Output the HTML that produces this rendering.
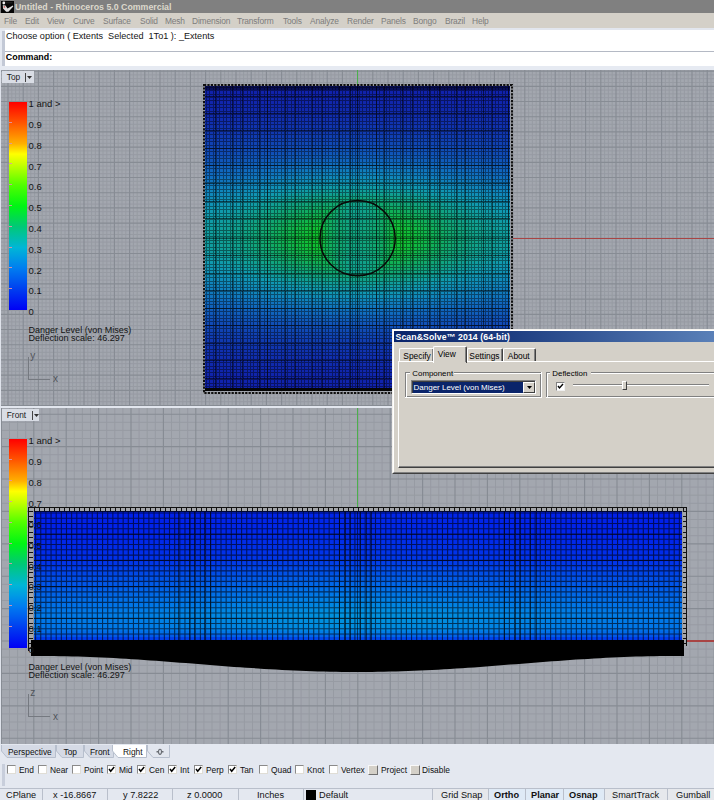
<!DOCTYPE html>
<html><head><meta charset="utf-8">
<style>
*{margin:0;padding:0;box-sizing:border-box}
html,body{width:714px;height:800px;overflow:hidden;background:#e4e8f0}
body{position:relative;font-family:"Liberation Sans",sans-serif;font-size:9px;color:#000}
.a{position:absolute;white-space:pre;line-height:1}
.g{position:absolute;display:block}
svg{position:absolute;display:block}
#title{left:0;top:0;width:714px;height:13px;background:#808080}
#menu{left:0;top:13px;width:714px;height:15px;background:#d4d0c8}
#menu span{position:absolute;top:3.5px;font-size:8.4px;color:#7c7c7c;line-height:1;letter-spacing:-0.15px}
#cmd{left:0;top:28px;width:714px;height:42px;background:#e6eaf2}
.vp{position:absolute;left:0;width:714px;height:336px;overflow:hidden}
.vtab{position:absolute;left:2px;top:1px;height:12px;background:#d9dde5}
.vtab span{position:absolute;top:1.7px;left:4.8px;font-size:8.3px;color:#1a1a1a;line-height:1}
.cbar{position:absolute;left:9px;width:18px}
.lbl{position:absolute;font-size:9.2px;color:#141414;line-height:1;white-space:pre}
#tabs{left:0;top:744px;width:714px;height:14px;background:#e4e8f0}
#osnap{left:0;top:758px;width:714px;height:30px;background:#e4e8f0}
#status{left:0;top:788px;width:714px;height:12px;background:#e4e8f0;border-top:1px solid #b8bcc4}
</style></head><body>
<div id="title" class="a"><div class="a" style="left:1px;top:1px;width:13px;height:12px;background:#050505"></div><svg width="13" height="12" style="left:1px;top:1px"><circle cx="2.8" cy="2" r="1.4" fill="#f0f0f0"/><path d="M1.8 4.2 L4.5 4.4 L6.5 7.6 L11.8 4.4 L12.3 5.6 L7.4 10.8 L5.2 10.8 L2 7.6 Z" fill="#dedede"/><path d="M4.2 1.8 L11.5 1.8" stroke="#303030" stroke-width="0.8"/><circle cx="3.4" cy="5.9" r="0.9" fill="#d06060"/><path d="M2 5 L2.6 4.6" stroke="#80c0c0" stroke-width="0.8"/></svg><span class="a" style="left:15px;top:3px;font-size:8.8px;font-weight:bold;color:#dcd8cc">Untitled - Rhinoceros 5.0 Commercial</span></div>
<div id="menu" class="a"><span style="left:4px">File</span><span style="left:25px">Edit</span><span style="left:47px">View</span><span style="left:73px">Curve</span><span style="left:103px">Surface</span><span style="left:140px">Solid</span><span style="left:165px">Mesh</span><span style="left:192px">Dimension</span><span style="left:237px">Transform</span><span style="left:283px">Tools</span><span style="left:310px">Analyze</span><span style="left:347px">Render</span><span style="left:381px">Panels</span><span style="left:413px">Bongo</span><span style="left:445px">Brazil</span><span style="left:472px">Help</span></div>
<div id="cmd" class="a"><div class="a" style="left:0;top:0;width:714px;height:2px;background:#e2e6ee"></div><div class="a" style="left:2px;top:3px;width:3px;height:35px;background:#c3c9d6"></div><div class="a" style="left:5px;top:2px;width:709px;height:36px;background:#fff"></div><div class="a" style="left:5px;top:23px;width:709px;height:1px;background:#b4b9c4"></div><span class="a" style="left:6px;top:3.8px;font-size:9.1px;color:#141414">Choose option ( Extents  Selected  1To1 ): _Extents</span><span class="a" style="left:5.8px;top:24.9px;font-size:8.9px;font-weight:bold;color:#000">Command:</span></div>
<div class="vp" style="top:70px">
<svg class="g" width="714" height="336" style="left:0;top:0;background:#a3a7af"><path d="M0.40 0V336M4.20 0V336M11.80 0V336M15.60 0V336M19.40 0V336M27.00 0V336M30.80 0V336M34.60 0V336M42.20 0V336M46.00 0V336M49.80 0V336M57.40 0V336M61.20 0V336M65.00 0V336M72.60 0V336M76.40 0V336M80.20 0V336M87.80 0V336M91.60 0V336M95.40 0V336M103.00 0V336M106.80 0V336M110.60 0V336M118.20 0V336M122.00 0V336M125.80 0V336M133.40 0V336M137.20 0V336M141.00 0V336M148.60 0V336M152.40 0V336M156.20 0V336M163.80 0V336M167.60 0V336M171.40 0V336M179.00 0V336M182.80 0V336M186.60 0V336M194.20 0V336M198.00 0V336M201.80 0V336M209.40 0V336M213.20 0V336M217.00 0V336M224.60 0V336M228.40 0V336M232.20 0V336M239.80 0V336M243.60 0V336M247.40 0V336M255.00 0V336M258.80 0V336M262.60 0V336M270.20 0V336M274.00 0V336M277.80 0V336M285.40 0V336M289.20 0V336M293.00 0V336M300.60 0V336M304.40 0V336M308.20 0V336M315.80 0V336M319.60 0V336M323.40 0V336M331.00 0V336M334.80 0V336M338.60 0V336M346.20 0V336M350.00 0V336M353.80 0V336M361.40 0V336M365.20 0V336M369.00 0V336M376.60 0V336M380.40 0V336M384.20 0V336M391.80 0V336M395.60 0V336M399.40 0V336M407.00 0V336M410.80 0V336M414.60 0V336M422.20 0V336M426.00 0V336M429.80 0V336M437.40 0V336M441.20 0V336M445.00 0V336M452.60 0V336M456.40 0V336M460.20 0V336M467.80 0V336M471.60 0V336M475.40 0V336M483.00 0V336M486.80 0V336M490.60 0V336M498.20 0V336M502.00 0V336M505.80 0V336M513.40 0V336M517.20 0V336M521.00 0V336M528.60 0V336M532.40 0V336M536.20 0V336M543.80 0V336M547.60 0V336M551.40 0V336M559.00 0V336M562.80 0V336M566.60 0V336M574.20 0V336M578.00 0V336M581.80 0V336M589.40 0V336M593.20 0V336M597.00 0V336M604.60 0V336M608.40 0V336M612.20 0V336M619.80 0V336M623.60 0V336M627.40 0V336M635.00 0V336M638.80 0V336M642.60 0V336M650.20 0V336M654.00 0V336M657.80 0V336M665.40 0V336M669.20 0V336M673.00 0V336M680.60 0V336M684.40 0V336M688.20 0V336M695.80 0V336M699.60 0V336M703.40 0V336M711.00 0V336M714.80 0V336M0 4.90H714M0 8.70H714M0 12.50H714M0 20.10H714M0 23.90H714M0 27.70H714M0 35.30H714M0 39.10H714M0 42.90H714M0 50.50H714M0 54.30H714M0 58.10H714M0 65.70H714M0 69.50H714M0 73.30H714M0 80.90H714M0 84.70H714M0 88.50H714M0 96.10H714M0 99.90H714M0 103.70H714M0 111.30H714M0 115.10H714M0 118.90H714M0 126.50H714M0 130.30H714M0 134.10H714M0 141.70H714M0 145.50H714M0 149.30H714M0 156.90H714M0 160.70H714M0 164.50H714M0 172.10H714M0 175.90H714M0 179.70H714M0 187.30H714M0 191.10H714M0 194.90H714M0 202.50H714M0 206.30H714M0 210.10H714M0 217.70H714M0 221.50H714M0 225.30H714M0 232.90H714M0 236.70H714M0 240.50H714M0 248.10H714M0 251.90H714M0 255.70H714M0 263.30H714M0 267.10H714M0 270.90H714M0 278.50H714M0 282.30H714M0 286.10H714M0 293.70H714M0 297.50H714M0 301.30H714M0 308.90H714M0 312.70H714M0 316.50H714M0 324.10H714M0 327.90H714M0 331.70H714" stroke="#979ba3" stroke-width="1" fill="none"/><path d="M8.00 0V336M23.20 0V336M38.40 0V336M53.60 0V336M68.80 0V336M84.00 0V336M99.20 0V336M114.40 0V336M129.60 0V336M144.80 0V336M160.00 0V336M175.20 0V336M190.40 0V336M205.60 0V336M220.80 0V336M236.00 0V336M251.20 0V336M266.40 0V336M281.60 0V336M296.80 0V336M312.00 0V336M327.20 0V336M342.40 0V336M357.60 0V336M372.80 0V336M388.00 0V336M403.20 0V336M418.40 0V336M433.60 0V336M448.80 0V336M464.00 0V336M479.20 0V336M494.40 0V336M509.60 0V336M524.80 0V336M540.00 0V336M555.20 0V336M570.40 0V336M585.60 0V336M600.80 0V336M616.00 0V336M631.20 0V336M646.40 0V336M661.60 0V336M676.80 0V336M692.00 0V336M707.20 0V336M0 1.10H714M0 16.30H714M0 31.50H714M0 46.70H714M0 61.90H714M0 77.10H714M0 92.30H714M0 107.50H714M0 122.70H714M0 137.90H714M0 153.10H714M0 168.30H714M0 183.50H714M0 198.70H714M0 213.90H714M0 229.10H714M0 244.30H714M0 259.50H714M0 274.70H714M0 289.90H714M0 305.10H714M0 320.30H714M0 335.50H714" stroke="#878c94" stroke-width="1.15" fill="none"/></svg>
<div class="a" style="left:0;top:0;width:1px;height:336px;background:#dfe3eb"></div>
<svg width="310" height="310" style="left:203px;top:14px"><rect x="1" y="1" width="308" height="308" fill="none" stroke="#9a9ca0" stroke-width="2"/><rect x="1" y="1" width="308" height="308" fill="none" stroke="#101010" stroke-width="2" stroke-dasharray="2.2 1.2"/><rect x="2" y="304" width="306" height="3" fill="#050505"/></svg>
<div class="a" style="left:205px;top:16px;width:305px;height:4px;background:linear-gradient(to right,#1021ac 0.0%,#1021ac 3.1%,#1021ac 6.2%,#1021ac 9.4%,#1021ac 12.5%,#1021ac 15.6%,#1021ac 18.8%,#1021ac 21.9%,#1021ac 25.0%,#1022ac 28.1%,#1022ac 31.2%,#1022ac 34.4%,#1022ac 37.5%,#1022ac 40.6%,#1022ac 43.8%,#1022ac 46.9%,#1022ac 50.0%,#1022ac 53.1%,#1022ac 56.2%,#1022ac 59.4%,#1022ac 62.5%,#1022ac 65.6%,#1022ac 68.8%,#1022ac 71.9%,#1021ac 75.0%,#1021ac 78.1%,#1021ac 81.2%,#1021ac 84.4%,#1021ac 87.5%,#1021ac 90.6%,#1021ac 93.8%,#1021ac 96.9%,#1021ac 100.0%)"></div><div class="a" style="left:205px;top:20px;width:305px;height:4px;background:linear-gradient(to right,#1022ac 0.0%,#1022ac 3.1%,#1022ac 6.2%,#1022ac 9.4%,#1022ac 12.5%,#1022ac 15.6%,#1022ac 18.8%,#1022ac 21.9%,#1022ad 25.0%,#1022ad 28.1%,#1022ad 31.2%,#1022ad 34.4%,#1022ad 37.5%,#1022ad 40.6%,#1022ad 43.8%,#1022ad 46.9%,#1022ad 50.0%,#1022ad 53.1%,#1022ad 56.2%,#1022ad 59.4%,#1022ad 62.5%,#1022ad 65.6%,#1022ad 68.8%,#1022ad 71.9%,#1022ad 75.0%,#1022ac 78.1%,#1022ac 81.2%,#1022ac 84.4%,#1022ac 87.5%,#1022ac 90.6%,#1022ac 93.8%,#1022ac 96.9%,#1022ac 100.0%)"></div><div class="a" style="left:205px;top:24px;width:305px;height:4px;background:linear-gradient(to right,#1023ad 0.0%,#1023ad 3.1%,#1023ad 6.2%,#1023ad 9.4%,#1023ad 12.5%,#1023ad 15.6%,#1023ad 18.8%,#1024ad 21.9%,#1024ad 25.0%,#1024ad 28.1%,#1024ad 31.2%,#1024ac 34.4%,#1024ac 37.5%,#1024ac 40.6%,#1024ac 43.8%,#1024ac 46.9%,#1024ac 50.0%,#1024ac 53.1%,#1024ac 56.2%,#1024ac 59.4%,#1024ac 62.5%,#1024ac 65.6%,#1024ad 68.8%,#1024ad 71.9%,#1024ad 75.0%,#1024ad 78.1%,#1023ad 81.2%,#1023ad 84.4%,#1023ad 87.5%,#1023ad 90.6%,#1023ad 93.8%,#1023ad 96.9%,#1023ad 100.0%)"></div><div class="a" style="left:205px;top:28px;width:305px;height:4px;background:linear-gradient(to right,#1024ac 0.0%,#1024ac 3.1%,#1024ad 6.2%,#1024ad 9.4%,#1024ad 12.5%,#1024ad 15.6%,#1024ad 18.8%,#1025ad 21.9%,#1025ad 25.0%,#1025ad 28.1%,#1025ad 31.2%,#1025ad 34.4%,#1025ad 37.5%,#1025ad 40.6%,#1025ad 43.8%,#1025ad 46.9%,#1025ad 50.0%,#1025ad 53.1%,#1025ad 56.2%,#1025ad 59.4%,#1025ad 62.5%,#1025ad 65.6%,#1025ad 68.8%,#1025ad 71.9%,#1025ad 75.0%,#1025ad 78.1%,#1024ad 81.2%,#1024ad 84.4%,#1024ad 87.5%,#1024ad 90.6%,#1024ad 93.8%,#1024ac 96.9%,#1024ac 100.0%)"></div><div class="a" style="left:205px;top:32px;width:305px;height:4px;background:linear-gradient(to right,#1026ad 0.0%,#1026ad 3.1%,#1026ad 6.2%,#1026ad 9.4%,#1026ad 12.5%,#1026ad 15.6%,#1026ad 18.8%,#1026ad 21.9%,#1026ad 25.0%,#1026ad 28.1%,#1026ad 31.2%,#1027ad 34.4%,#1027ad 37.5%,#1027ad 40.6%,#1027ad 43.8%,#1027ad 46.9%,#1027ad 50.0%,#1027ad 53.1%,#1027ad 56.2%,#1027ad 59.4%,#1027ad 62.5%,#1027ad 65.6%,#1026ad 68.8%,#1026ad 71.9%,#1026ad 75.0%,#1026ad 78.1%,#1026ad 81.2%,#1026ad 84.4%,#1026ad 87.5%,#1026ad 90.6%,#1026ad 93.8%,#1026ad 96.9%,#1026ad 100.0%)"></div><div class="a" style="left:205px;top:36px;width:305px;height:4px;background:linear-gradient(to right,#1027ad 0.0%,#1027ad 3.1%,#1027ad 6.2%,#1028ae 9.4%,#1028ae 12.5%,#1028ae 15.6%,#1028ae 18.8%,#1028ae 21.9%,#1028ae 25.0%,#1028ae 28.1%,#1028ae 31.2%,#1028ae 34.4%,#1028ae 37.5%,#1029ae 40.6%,#1029ae 43.8%,#1029ae 46.9%,#1029ae 50.0%,#1029ae 53.1%,#1029ae 56.2%,#1029ae 59.4%,#1028ae 62.5%,#1028ae 65.6%,#1028ae 68.8%,#1028ae 71.9%,#1028ae 75.0%,#1028ae 78.1%,#1028ae 81.2%,#1028ae 84.4%,#1028ae 87.5%,#1028ae 90.6%,#1027ad 93.8%,#1027ad 96.9%,#1027ad 100.0%)"></div><div class="a" style="left:205px;top:40px;width:305px;height:4px;background:linear-gradient(to right,#1029ae 0.0%,#1029ae 3.1%,#1029ae 6.2%,#1029ae 9.4%,#102aae 12.5%,#102aae 15.6%,#102aae 18.8%,#102aae 21.9%,#102aae 25.0%,#102aae 28.1%,#102aaf 31.2%,#102aaf 34.4%,#102aaf 37.5%,#102baf 40.6%,#102baf 43.8%,#102baf 46.9%,#102baf 50.0%,#102baf 53.1%,#102baf 56.2%,#102baf 59.4%,#102aaf 62.5%,#102aaf 65.6%,#102aaf 68.8%,#102aae 71.9%,#102aae 75.0%,#102aae 78.1%,#102aae 81.2%,#102aae 84.4%,#102aae 87.5%,#1029ae 90.6%,#1029ae 93.8%,#1029ae 96.9%,#1029ae 100.0%)"></div><div class="a" style="left:205px;top:44px;width:305px;height:4px;background:linear-gradient(to right,#102baf 0.0%,#102baf 3.1%,#102baf 6.2%,#102baf 9.4%,#102caf 12.5%,#102caf 15.6%,#102caf 18.8%,#102cae 21.9%,#102dae 25.0%,#102daf 28.1%,#102daf 31.2%,#102daf 34.4%,#102daf 37.5%,#102daf 40.6%,#102daf 43.8%,#102daf 46.9%,#102daf 50.0%,#102daf 53.1%,#102daf 56.2%,#102daf 59.4%,#102daf 62.5%,#102daf 65.6%,#102daf 68.8%,#102daf 71.9%,#102dae 75.0%,#102dae 78.1%,#102caf 81.2%,#102caf 84.4%,#102caf 87.5%,#102baf 90.6%,#102baf 93.8%,#102baf 96.9%,#102baf 100.0%)"></div><div class="a" style="left:205px;top:48px;width:305px;height:4px;background:linear-gradient(to right,#102daf 0.0%,#102daf 3.1%,#102daf 6.2%,#102eaf 9.4%,#102eaf 12.5%,#102eaf 15.6%,#102faf 18.8%,#102faf 21.9%,#102faf 25.0%,#102faf 28.1%,#102faf 31.2%,#102faf 34.4%,#1030b0 37.5%,#1030b0 40.6%,#1030b0 43.8%,#1030b0 46.9%,#1030b0 50.0%,#1030b0 53.1%,#1030b0 56.2%,#1030b0 59.4%,#1030b0 62.5%,#102faf 65.6%,#102faf 68.8%,#102faf 71.9%,#102faf 75.0%,#102faf 78.1%,#102faf 81.2%,#102eaf 84.4%,#102eaf 87.5%,#102eaf 90.6%,#102daf 93.8%,#102daf 96.9%,#102daf 100.0%)"></div><div class="a" style="left:205px;top:52px;width:305px;height:4px;background:linear-gradient(to right,#102faf 0.0%,#1030b0 3.1%,#1030b0 6.2%,#1030b0 9.4%,#1031b0 12.5%,#1031b0 15.6%,#1031b0 18.8%,#1031b0 21.9%,#1031b0 25.0%,#1032b0 28.1%,#1032b0 31.2%,#1033b0 34.4%,#1033b0 37.5%,#1033b1 40.6%,#1033b1 43.8%,#1034b1 46.9%,#1034b1 50.0%,#1034b1 53.1%,#1033b1 56.2%,#1033b1 59.4%,#1033b0 62.5%,#1033b0 65.6%,#1032b0 68.8%,#1032b0 71.9%,#1031b0 75.0%,#1031b0 78.1%,#1031b0 81.2%,#1031b0 84.4%,#1031b0 87.5%,#1030b0 90.6%,#1030b0 93.8%,#1030b0 96.9%,#102faf 100.0%)"></div><div class="a" style="left:205px;top:56px;width:305px;height:4px;background:linear-gradient(to right,#1032b0 0.0%,#1033b0 3.1%,#1033b0 6.2%,#1033b1 9.4%,#1034b1 12.5%,#1034b1 15.6%,#1034b1 18.8%,#1034b1 21.9%,#1035b0 25.0%,#1035b1 28.1%,#1036b1 31.2%,#1036b1 34.4%,#1036b1 37.5%,#1036b1 40.6%,#1037b1 43.8%,#1037b1 46.9%,#1037b1 50.0%,#1037b1 53.1%,#1037b1 56.2%,#1036b1 59.4%,#1036b1 62.5%,#1036b1 65.6%,#1036b1 68.8%,#1035b1 71.9%,#1035b0 75.0%,#1034b1 78.1%,#1034b1 81.2%,#1034b1 84.4%,#1034b1 87.5%,#1033b1 90.6%,#1033b0 93.8%,#1033b0 96.9%,#1032b0 100.0%)"></div><div class="a" style="left:205px;top:60px;width:305px;height:4px;background:linear-gradient(to right,#1036b1 0.0%,#1036b1 3.1%,#1036b1 6.2%,#1036b1 9.4%,#1037b1 12.5%,#1037b1 15.6%,#1038b1 18.8%,#1038b1 21.9%,#1039b1 25.0%,#1039b2 28.1%,#1039b2 31.2%,#1039b2 34.4%,#103ab2 37.5%,#103ab2 40.6%,#103ab2 43.8%,#103bb2 46.9%,#103bb2 50.0%,#103bb2 53.1%,#103ab2 56.2%,#103ab2 59.4%,#103ab2 62.5%,#1039b2 65.6%,#1039b2 68.8%,#1039b2 71.9%,#1039b1 75.0%,#1038b1 78.1%,#1038b1 81.2%,#1037b1 84.4%,#1037b1 87.5%,#1036b1 90.6%,#1036b1 93.8%,#1036b1 96.9%,#1036b1 100.0%)"></div><div class="a" style="left:205px;top:64px;width:305px;height:4px;background:linear-gradient(to right,#1039b2 0.0%,#1039b2 3.1%,#1039b2 6.2%,#103ab2 9.4%,#103ab2 12.5%,#103bb2 15.6%,#103cb2 18.8%,#103cb2 21.9%,#103cb3 25.0%,#103db3 28.1%,#103eb3 31.2%,#103eb3 34.4%,#103fb3 37.5%,#103fb3 40.6%,#103fb3 43.8%,#103fb3 46.9%,#103fb3 50.0%,#103fb3 53.1%,#103fb3 56.2%,#103fb3 59.4%,#103fb3 62.5%,#103eb3 65.6%,#103eb3 68.8%,#103db3 71.9%,#103cb3 75.0%,#103cb2 78.1%,#103cb2 81.2%,#103bb2 84.4%,#103ab2 87.5%,#103ab2 90.6%,#1039b2 93.8%,#1039b2 96.9%,#1039b2 100.0%)"></div><div class="a" style="left:205px;top:68px;width:305px;height:4px;background:linear-gradient(to right,#103cb3 0.0%,#103db3 3.1%,#103db3 6.2%,#103eb3 9.4%,#103fb3 12.5%,#103fb3 15.6%,#103fb4 18.8%,#1040b4 21.9%,#1041b4 25.0%,#1042b4 28.1%,#1042b4 31.2%,#1042b4 34.4%,#1043b5 37.5%,#1043b5 40.6%,#1044b5 43.8%,#1044b5 46.9%,#1044b5 50.0%,#1044b5 53.1%,#1044b5 56.2%,#1043b5 59.4%,#1043b5 62.5%,#1042b4 65.6%,#1042b4 68.8%,#1042b4 71.9%,#1041b4 75.0%,#1040b4 78.1%,#103fb4 81.2%,#103fb3 84.4%,#103fb3 87.5%,#103eb3 90.6%,#103db3 93.8%,#103db3 96.9%,#103cb3 100.0%)"></div><div class="a" style="left:205px;top:72px;width:305px;height:4px;background:linear-gradient(to right,#1041b4 0.0%,#1041b4 3.1%,#1042b4 6.2%,#1042b4 9.4%,#1042b4 12.5%,#1043b5 15.6%,#1044b5 18.8%,#1045b5 21.9%,#1045b5 25.0%,#1046b5 28.1%,#1047b6 31.2%,#1048b6 34.4%,#1048b6 37.5%,#1048b6 40.6%,#1049b6 43.8%,#1049b6 46.9%,#1049b6 50.0%,#1049b6 53.1%,#1049b6 56.2%,#1048b6 59.4%,#1048b6 62.5%,#1048b6 65.6%,#1047b6 68.8%,#1046b5 71.9%,#1045b5 75.0%,#1045b5 78.1%,#1044b5 81.2%,#1043b5 84.4%,#1042b4 87.5%,#1042b4 90.6%,#1042b4 93.8%,#1041b4 96.9%,#1041b4 100.0%)"></div><div class="a" style="left:205px;top:76px;width:305px;height:4px;background:linear-gradient(to right,#1045b5 0.0%,#1045b5 3.1%,#1046b5 6.2%,#1047b6 9.4%,#1048b6 12.5%,#1048b6 15.6%,#1049b6 18.8%,#104ab6 21.9%,#104bb7 25.0%,#104bb7 28.1%,#104cb7 31.2%,#104db7 34.4%,#104eb8 37.5%,#104fb8 40.6%,#104fb8 43.8%,#104fb8 46.9%,#104fb8 50.0%,#104fb8 53.1%,#104fb8 56.2%,#104fb8 59.4%,#104eb8 62.5%,#104db7 65.6%,#104cb7 68.8%,#104cb7 71.9%,#104bb7 75.0%,#104ab6 78.1%,#1049b6 81.2%,#1048b6 84.4%,#1048b6 87.5%,#1047b6 90.6%,#1046b5 93.8%,#1045b5 96.9%,#1045b5 100.0%)"></div><div class="a" style="left:205px;top:80px;width:305px;height:4px;background:linear-gradient(to right,#1049b6 0.0%,#104ab6 3.1%,#104bb7 6.2%,#104bb7 9.4%,#104cb7 12.5%,#104eb7 15.6%,#104fb8 18.8%,#104fb8 21.9%,#1051b8 25.0%,#1052b9 28.1%,#1053b9 31.2%,#1053b9 34.4%,#1054b9 37.5%,#1055b9 40.6%,#1056ba 43.8%,#1056ba 46.9%,#1056ba 50.0%,#1056ba 53.1%,#1056ba 56.2%,#1055b9 59.4%,#1054b9 62.5%,#1053b9 65.6%,#1053b9 68.8%,#1052b9 71.9%,#1051b8 75.0%,#104fb8 78.1%,#104fb8 81.2%,#104eb7 84.4%,#104cb7 87.5%,#104bb7 90.6%,#104bb7 93.8%,#104ab6 96.9%,#1049b6 100.0%)"></div><div class="a" style="left:205px;top:84px;width:305px;height:4px;background:linear-gradient(to right,#104fb8 0.0%,#104fb8 3.1%,#1050b8 6.2%,#1051b8 9.4%,#1052b9 12.5%,#1053b9 15.6%,#1054b9 18.8%,#1056ba 21.9%,#1057ba 25.0%,#1058ba 28.1%,#1059bb 31.2%,#105abb 34.4%,#105bbb 37.5%,#105cbb 40.6%,#105dbb 43.8%,#105dbc 46.9%,#105dbc 50.0%,#105dbc 53.1%,#105dbb 56.2%,#105cbb 59.4%,#105bbb 62.5%,#105abb 65.6%,#1059bb 68.8%,#1058ba 71.9%,#1057ba 75.0%,#1056ba 78.1%,#1054b9 81.2%,#1053b9 84.4%,#1052b9 87.5%,#1051b8 90.6%,#1050b8 93.8%,#104fb8 96.9%,#104fb8 100.0%)"></div><div class="a" style="left:205px;top:88px;width:305px;height:4px;background:linear-gradient(to right,#1053b9 0.0%,#1054b9 3.1%,#1056ba 6.2%,#1056ba 9.4%,#1058ba 12.5%,#1059bb 15.6%,#105abb 18.8%,#105cbb 21.9%,#105ebc 25.0%,#105fbc 28.1%,#1060bc 31.2%,#1062bd 34.4%,#1063bd 37.5%,#1064bd 40.6%,#1064bd 43.8%,#1064be 46.9%,#1064be 50.0%,#1064be 53.1%,#1064bd 56.2%,#1064bd 59.4%,#1063bd 62.5%,#1062bd 65.6%,#1060bc 68.8%,#105fbc 71.9%,#105ebc 75.0%,#105cbb 78.1%,#105bbb 81.2%,#1059bb 84.4%,#1058ba 87.5%,#1056ba 90.6%,#1056ba 93.8%,#1055b9 96.9%,#1053b9 100.0%)"></div><div class="a" style="left:205px;top:92px;width:305px;height:4px;background:linear-gradient(to right,#1059bb 0.0%,#105abb 3.1%,#105bbb 6.2%,#105dbb 9.4%,#105ebc 12.5%,#105fbc 15.6%,#1061bd 18.8%,#1063bd 21.9%,#1065be 25.0%,#1067be 28.1%,#1068be 31.2%,#1069bf 34.4%,#106bbf 37.5%,#106cbf 40.6%,#106dbf 43.8%,#106dbf 46.9%,#106dbf 50.0%,#106dbf 53.1%,#106dbf 56.2%,#106cbf 59.4%,#106bbf 62.5%,#1069bf 65.6%,#1068be 68.8%,#1067be 71.9%,#1065be 75.0%,#1063bd 78.1%,#1061bd 81.2%,#105fbc 84.4%,#105ebc 87.5%,#105dbb 90.6%,#105bbb 93.8%,#105abb 96.9%,#1059bb 100.0%)"></div><div class="a" style="left:205px;top:96px;width:305px;height:4px;background:linear-gradient(to right,#105fbc 0.0%,#1060bc 3.1%,#1061bd 6.2%,#1063bd 9.4%,#1064be 12.5%,#1066be 15.6%,#1068be 18.8%,#106abf 21.9%,#106dbf 25.0%,#106ebf 28.1%,#1070be 31.2%,#1072bf 34.4%,#1073be 37.5%,#1074be 40.6%,#1075be 43.8%,#1075be 46.9%,#1075be 50.0%,#1075be 53.1%,#1075be 56.2%,#1074be 59.4%,#1073be 62.5%,#1072bf 65.6%,#1070be 68.8%,#106ebf 71.9%,#106dbf 75.0%,#106abf 78.1%,#1068bf 81.2%,#1067be 84.4%,#1064be 87.5%,#1063bd 90.6%,#1062bd 93.8%,#1060bc 96.9%,#105fbc 100.0%)"></div><div class="a" style="left:205px;top:100px;width:305px;height:4px;background:linear-gradient(to right,#1065be 0.0%,#1066be 3.1%,#1068be 6.2%,#1069bf 9.4%,#106bbf 12.5%,#106ebf 15.6%,#106fbf 18.8%,#1072bf 21.9%,#1074bf 25.0%,#1076be 28.1%,#1078be 31.2%,#107abd 34.4%,#107cbe 37.5%,#107dbd 40.6%,#107dbd 43.8%,#107ebd 46.9%,#107ebd 50.0%,#107ebd 53.1%,#107dbd 56.2%,#107dbd 59.4%,#107cbe 62.5%,#107abd 65.6%,#1078be 68.8%,#1076be 71.9%,#1074be 75.0%,#1072bf 78.1%,#106fbf 81.2%,#106ebf 84.4%,#106cbf 87.5%,#1069bf 90.6%,#1068be 93.8%,#1066be 96.9%,#1065be 100.0%)"></div><div class="a" style="left:205px;top:104px;width:305px;height:4px;background:linear-gradient(to right,#106bbf 0.0%,#106dbf 3.1%,#106ebf 6.2%,#1070be 9.4%,#1072be 12.5%,#1074be 15.6%,#1076be 18.8%,#1079be 21.9%,#107cbe 25.0%,#107ebd 28.1%,#1081bd 31.2%,#1083bd 34.4%,#1085bc 37.5%,#1086bb 40.6%,#1087bb 43.8%,#1087bb 46.9%,#1087bb 50.0%,#1087bb 53.1%,#1087bb 56.2%,#1086bb 59.4%,#1085bc 62.5%,#1083bd 65.6%,#1081bd 68.8%,#107ebd 71.9%,#107cbe 75.0%,#1079be 78.1%,#1076be 81.2%,#1074be 84.4%,#1072be 87.5%,#1070be 90.6%,#106ebf 93.8%,#106dbf 96.9%,#106bbf 100.0%)"></div><div class="a" style="left:205px;top:108px;width:305px;height:4px;background:linear-gradient(to right,#1071bf 0.0%,#1073be 3.1%,#1075be 6.2%,#1076be 9.4%,#1079be 12.5%,#107cbe 15.6%,#107ebd 18.8%,#1081bd 21.9%,#1085bc 25.0%,#1087bb 28.1%,#1089bb 31.2%,#108bb9 34.4%,#108db8 37.5%,#108eb8 40.6%,#108fb7 43.8%,#108fb7 46.9%,#108fb7 50.0%,#108fb7 53.1%,#108fb7 56.2%,#108eb8 59.4%,#108db8 62.5%,#108bb9 65.6%,#1089bb 68.8%,#1087bb 71.9%,#1085bc 75.0%,#1081bd 78.1%,#107ebd 81.2%,#107cbe 84.4%,#1079be 87.5%,#1076be 90.6%,#1075be 93.8%,#1073be 96.9%,#1071bf 100.0%)"></div><div class="a" style="left:205px;top:112px;width:305px;height:4px;background:linear-gradient(to right,#1077be 0.0%,#1079be 3.1%,#107bbd 6.2%,#107dbd 9.4%,#1080bd 12.5%,#1083bc 15.6%,#1085bc 18.8%,#1088bb 21.9%,#108bb9 25.0%,#108eb8 28.1%,#1091b7 31.2%,#1093b6 34.4%,#1095b5 37.5%,#1097b4 40.6%,#1098b4 43.8%,#1098b4 46.9%,#1098b4 50.0%,#1098b4 53.1%,#1098b4 56.2%,#1097b4 59.4%,#1095b5 62.5%,#1093b6 65.6%,#1091b7 68.8%,#108eb8 71.9%,#108bb9 75.0%,#1088bb 78.1%,#1085bc 81.2%,#1083bc 84.4%,#1080bd 87.5%,#107dbd 90.6%,#107bbd 93.8%,#1079be 96.9%,#1077be 100.0%)"></div><div class="a" style="left:205px;top:116px;width:305px;height:4px;background:linear-gradient(to right,#107dbd 0.0%,#107fbd 3.1%,#1081bd 6.2%,#1084bd 9.4%,#1086bb 12.5%,#1089bb 15.6%,#108cb9 18.8%,#108fb7 21.9%,#1093b6 25.0%,#1096b4 28.1%,#1099b3 31.2%,#109bb0 34.4%,#109bac 37.5%,#109baa 40.6%,#109ca8 43.8%,#109ca8 46.9%,#109ca9 50.0%,#109ca8 53.1%,#109ca8 56.2%,#109baa 59.4%,#109bac 62.5%,#109bb0 65.6%,#1099b3 68.8%,#1096b4 71.9%,#1093b6 75.0%,#108fb7 78.1%,#108cb9 81.2%,#1089bb 84.4%,#1086bb 87.5%,#1084bd 90.6%,#1081bd 93.8%,#107fbd 96.9%,#107dbd 100.0%)"></div><div class="a" style="left:205px;top:120px;width:305px;height:4px;background:linear-gradient(to right,#1083bc 0.0%,#1085bc 3.1%,#1087bb 6.2%,#1089ba 9.4%,#108cb9 12.5%,#108fb7 15.6%,#1093b6 18.8%,#1096b4 21.9%,#109ab3 25.0%,#109bad 28.1%,#109ca7 31.2%,#109da2 34.4%,#109e9e 37.5%,#109e9b 40.6%,#109e9a 43.8%,#109e9a 46.9%,#109e9b 50.0%,#109e9a 53.1%,#109e9a 56.2%,#109e9b 59.4%,#109e9e 62.5%,#109da2 65.6%,#109ca7 68.8%,#109bac 71.9%,#109ab3 75.0%,#1096b4 78.1%,#1093b6 81.2%,#108fb7 84.4%,#108cb9 87.5%,#108aba 90.6%,#1087bb 93.8%,#1085bc 96.9%,#1083bc 100.0%)"></div><div class="a" style="left:205px;top:124px;width:305px;height:4px;background:linear-gradient(to right,#1088bb 0.0%,#108aba 3.1%,#108cb9 6.2%,#108fb7 9.4%,#1092b7 12.5%,#1095b5 15.6%,#1099b3 18.8%,#109bae 21.9%,#109ca7 25.0%,#109ea0 28.1%,#109e99 31.2%,#10a094 34.4%,#10a190 37.5%,#10a18d 40.6%,#10a18b 43.8%,#10a18b 46.9%,#10a18c 50.0%,#10a18b 53.1%,#10a18b 56.2%,#10a18d 59.4%,#10a190 62.5%,#10a094 65.6%,#109e99 68.8%,#109ea0 71.9%,#109ca7 75.0%,#109bae 78.1%,#1099b3 81.2%,#1095b5 84.4%,#1092b7 87.5%,#108fb7 90.6%,#108cb9 93.8%,#108aba 96.9%,#1088bb 100.0%)"></div><div class="a" style="left:205px;top:128px;width:305px;height:4px;background:linear-gradient(to right,#108db9 0.0%,#108eb7 3.1%,#1091b7 6.2%,#1094b5 9.4%,#1098b4 12.5%,#109bb1 15.6%,#109baa 18.8%,#109da2 21.9%,#109e9b 25.0%,#10a093 28.1%,#10a18c 31.2%,#10a286 34.4%,#10a382 37.5%,#10a47e 40.6%,#10a47d 43.8%,#10a47d 46.9%,#10a47e 50.0%,#10a47d 53.1%,#10a47d 56.2%,#10a47e 59.4%,#10a382 62.5%,#10a286 65.6%,#10a18c 68.8%,#10a093 71.9%,#109e9b 75.0%,#109da2 78.1%,#109baa 81.2%,#109bb1 84.4%,#1098b4 87.5%,#1095b5 90.6%,#1091b7 93.8%,#108fb7 96.9%,#108db9 100.0%)"></div><div class="a" style="left:205px;top:132px;width:305px;height:4px;background:linear-gradient(to right,#1091b7 0.0%,#1093b6 3.1%,#1096b4 6.2%,#1099b3 9.4%,#109bae 12.5%,#109ca8 15.6%,#109ea0 18.8%,#109f98 21.9%,#10a18f 25.0%,#10a287 28.1%,#10a47f 31.2%,#10a578 34.4%,#10a674 37.5%,#10a771 40.6%,#10a76f 43.8%,#10a385 46.9%,#10a18d 50.0%,#10a385 53.1%,#10a76f 56.2%,#10a771 59.4%,#10a674 62.5%,#10a578 65.6%,#10a47f 68.8%,#10a287 71.9%,#10a18f 75.0%,#109f98 78.1%,#109ea0 81.2%,#109ca8 84.4%,#109bae 87.5%,#1099b3 90.6%,#1096b4 93.8%,#1093b6 96.9%,#1091b7 100.0%)"></div><div class="a" style="left:205px;top:136px;width:305px;height:4px;background:linear-gradient(to right,#1095b5 0.0%,#1098b4 3.1%,#109ab2 6.2%,#109bad 9.4%,#109ca6 12.5%,#109e9f 15.6%,#109f97 18.8%,#10a18e 21.9%,#10a385 25.0%,#10a47b 28.1%,#10a673 31.2%,#10a86b 34.4%,#10aa66 37.5%,#10ab63 40.6%,#10a575 43.8%,#10a288 46.9%,#10a18f 50.0%,#10a288 53.1%,#10a576 56.2%,#10ab63 59.4%,#10aa66 62.5%,#10a86b 65.6%,#10a672 68.8%,#10a47b 71.9%,#10a384 75.0%,#10a18e 78.1%,#109f97 81.2%,#109e9e 84.4%,#109ca6 87.5%,#109bac 90.6%,#109ab2 93.8%,#1098b4 96.9%,#1095b5 100.0%)"></div><div class="a" style="left:205px;top:140px;width:305px;height:4px;background:linear-gradient(to right,#1099b4 0.0%,#109bb1 3.1%,#109bab 6.2%,#109ca5 9.4%,#109e9e 12.5%,#109f97 15.6%,#10a18e 18.8%,#10a385 21.9%,#10a47a 25.0%,#10a770 28.1%,#10a967 31.2%,#10ad5f 34.4%,#10af59 37.5%,#10b155 40.6%,#10a578 43.8%,#10a288 46.9%,#10a18e 50.0%,#10a288 53.1%,#10a479 56.2%,#10b155 59.4%,#10af59 62.5%,#10ad5f 65.6%,#10a967 68.8%,#10a770 71.9%,#10a47a 75.0%,#10a384 78.1%,#10a18e 81.2%,#109f97 84.4%,#109e9e 87.5%,#109ca5 90.6%,#109bab 93.8%,#109bb1 96.9%,#1099b4 100.0%)"></div><div class="a" style="left:205px;top:144px;width:305px;height:4px;background:linear-gradient(to right,#109baf 0.0%,#109bab 3.1%,#109ca5 6.2%,#109e9f 9.4%,#109f98 12.5%,#10a190 15.6%,#10a286 18.8%,#10a47c 21.9%,#10a671 25.0%,#10aa66 28.1%,#10ae5c 31.2%,#10b253 34.4%,#10b44d 37.5%,#10af5b 40.6%,#10a578 43.8%,#10a285 46.9%,#10a18c 50.0%,#10a285 53.1%,#10a578 56.2%,#10ae5c 59.4%,#10b44d 62.5%,#10b253 65.6%,#10ae5c 68.8%,#10aa66 71.9%,#10a671 75.0%,#10a47b 78.1%,#10a286 81.2%,#10a18f 84.4%,#109f98 87.5%,#109e9f 90.6%,#109ca5 93.8%,#109bab 96.9%,#109baf 100.0%)"></div><div class="a" style="left:205px;top:148px;width:305px;height:4px;background:linear-gradient(to right,#109bab 0.0%,#109ca6 3.1%,#109ea1 6.2%,#109e9a 9.4%,#10a092 12.5%,#10a18a 15.6%,#10a47f 18.8%,#10a675 21.9%,#10a869 25.0%,#10ae5d 28.1%,#10b252 31.2%,#10b749 34.4%,#10ba43 37.5%,#10ae5e 40.6%,#10a575 43.8%,#10a382 46.9%,#10a189 50.0%,#10a382 53.1%,#10a576 56.2%,#10ad5f 59.4%,#10ba43 62.5%,#10b749 65.6%,#10b352 68.8%,#10ae5d 71.9%,#10a868 75.0%,#10a675 78.1%,#10a47f 81.2%,#10a189 84.4%,#10a092 87.5%,#109e9a 90.6%,#109ea1 93.8%,#109ca6 96.9%,#109bab 100.0%)"></div><div class="a" style="left:205px;top:152px;width:305px;height:4px;background:linear-gradient(to right,#109ca7 0.0%,#109da2 3.1%,#109e9c 6.2%,#109f95 9.4%,#10a18e 12.5%,#10a385 15.6%,#10a47a 18.8%,#10a76f 21.9%,#10ab62 25.0%,#10b155 28.1%,#10b64a 31.2%,#10bb41 34.4%,#10be3a 37.5%,#10ae5d 40.6%,#10a673 43.8%,#10a47f 46.9%,#10a286 50.0%,#10a47f 53.1%,#10a673 56.2%,#10ae5e 59.4%,#10be3a 62.5%,#10bb41 65.6%,#10b64a 68.8%,#10b155 71.9%,#10ab62 75.0%,#10a76f 78.1%,#10a47a 81.2%,#10a385 84.4%,#10a18e 87.5%,#109f95 90.6%,#109e9c 93.8%,#109da2 96.9%,#109ca7 100.0%)"></div><div class="a" style="left:205px;top:156px;width:305px;height:4px;background:linear-gradient(to right,#109da4 0.0%,#109e9f 3.1%,#109e99 6.2%,#10a092 9.4%,#10a18a 12.5%,#10a481 15.6%,#10a575 18.8%,#10a86a 21.9%,#10ae5c 25.0%,#10b44f 28.1%,#10b944 31.2%,#10be3a 34.4%,#10c133 37.5%,#10ae5c 40.6%,#10a771 43.8%,#10a47d 46.9%,#10a384 50.0%,#10a47d 53.1%,#10a671 56.2%,#10ae5c 59.4%,#10c133 62.5%,#10be3a 65.6%,#10b944 68.8%,#10b44f 71.9%,#10ae5c 75.0%,#10a869 78.1%,#10a575 81.2%,#10a480 84.4%,#10a18a 87.5%,#10a092 90.6%,#109e99 93.8%,#109e9f 96.9%,#109da4 100.0%)"></div><div class="a" style="left:205px;top:160px;width:305px;height:4px;background:linear-gradient(to right,#109da1 0.0%,#109e9d 3.1%,#109f97 6.2%,#10a190 9.4%,#10a288 12.5%,#10a47e 15.6%,#10a673 18.8%,#10aa66 21.9%,#10b059 25.0%,#10b54c 28.1%,#10bb3f 31.2%,#10bf36 34.4%,#10c22f 37.5%,#10ae5b 40.6%,#10a76f 43.8%,#10a47b 46.9%,#10a382 50.0%,#10a47b 53.1%,#10a76f 56.2%,#10ae5c 59.4%,#10c32f 62.5%,#10c036 65.6%,#10bb3f 68.8%,#10b64c 71.9%,#10b058 75.0%,#10aa66 78.1%,#10a672 81.2%,#10a47e 84.4%,#10a288 87.5%,#10a190 90.6%,#109f97 93.8%,#109e9d 96.9%,#109da1 100.0%)"></div><div class="a" style="left:205px;top:164px;width:305px;height:4px;background:linear-gradient(to right,#109ea1 0.0%,#109e9c 3.1%,#109f96 6.2%,#10a18e 9.4%,#10a286 12.5%,#10a47c 15.6%,#10a672 18.8%,#10ab65 21.9%,#10b157 25.0%,#10b749 28.1%,#10bc3d 31.2%,#10c133 34.4%,#10c42c 37.5%,#10af5a 40.6%,#10a76e 43.8%,#10a47a 46.9%,#10a481 50.0%,#10a47a 53.1%,#10a76e 56.2%,#10af5b 59.4%,#10c42c 62.5%,#10c133 65.6%,#10bc3d 68.8%,#10b749 71.9%,#10b157 75.0%,#10ab65 78.1%,#10a671 81.2%,#10a47c 84.4%,#10a286 87.5%,#10a18e 90.6%,#109f95 93.8%,#109e9b 96.9%,#109ea1 100.0%)"></div><div class="a" style="left:205px;top:168px;width:305px;height:4px;background:linear-gradient(to right,#109ea1 0.0%,#109e9b 3.1%,#109f96 6.2%,#10a18e 9.4%,#10a286 12.5%,#10a47c 15.6%,#10a672 18.8%,#10ab65 21.9%,#10b157 25.0%,#10b749 28.1%,#10bc3d 31.2%,#10c133 34.4%,#10c42c 37.5%,#10af5a 40.6%,#10a76e 43.8%,#10a47a 46.9%,#10a481 50.0%,#10a47a 53.1%,#10a76e 56.2%,#10af5b 59.4%,#10c42c 62.5%,#10c133 65.6%,#10bc3d 68.8%,#10b749 71.9%,#10b156 75.0%,#10ab64 78.1%,#10a671 81.2%,#10a47c 84.4%,#10a286 87.5%,#10a18e 90.6%,#109f95 93.8%,#109e9b 96.9%,#109ea1 100.0%)"></div><div class="a" style="left:205px;top:172px;width:305px;height:4px;background:linear-gradient(to right,#109da1 0.0%,#109e9d 3.1%,#109f97 6.2%,#10a190 9.4%,#10a288 12.5%,#10a47e 15.6%,#10a672 18.8%,#10aa66 21.9%,#10b058 25.0%,#10b64c 28.1%,#10bb3f 31.2%,#10c036 34.4%,#10c32f 37.5%,#10af5b 40.6%,#10a76f 43.8%,#10a47b 46.9%,#10a382 50.0%,#10a47b 53.1%,#10a76f 56.2%,#10ae5c 59.4%,#10c32f 62.5%,#10c036 65.6%,#10bb3f 68.8%,#10b64b 71.9%,#10b058 75.0%,#10aa66 78.1%,#10a672 81.2%,#10a47e 84.4%,#10a287 87.5%,#10a18f 90.6%,#109f97 93.8%,#109e9d 96.9%,#109da1 100.0%)"></div><div class="a" style="left:205px;top:176px;width:305px;height:4px;background:linear-gradient(to right,#109da4 0.0%,#109e9e 3.1%,#109f99 6.2%,#10a092 9.4%,#10a18a 12.5%,#10a480 15.6%,#10a575 18.8%,#10a869 21.9%,#10ae5c 25.0%,#10b44f 28.1%,#10b943 31.2%,#10be39 34.4%,#10c133 37.5%,#10ae5c 40.6%,#10a770 43.8%,#10a47c 46.9%,#10a383 50.0%,#10a47c 53.1%,#10a771 56.2%,#10ae5c 59.4%,#10c132 62.5%,#10be39 65.6%,#10b943 68.8%,#10b44f 71.9%,#10ae5c 75.0%,#10a869 78.1%,#10a575 81.2%,#10a480 84.4%,#10a18a 87.5%,#10a091 90.6%,#109f98 93.8%,#109e9e 96.9%,#109da4 100.0%)"></div><div class="a" style="left:205px;top:180px;width:305px;height:4px;background:linear-gradient(to right,#109ca7 0.0%,#109da1 3.1%,#109e9c 6.2%,#109f95 9.4%,#10a18d 12.5%,#10a384 15.6%,#10a479 18.8%,#10a76e 21.9%,#10ac62 25.0%,#10b155 28.1%,#10b749 31.2%,#10bb40 34.4%,#10be39 37.5%,#10ae5d 40.6%,#10a672 43.8%,#10a47f 46.9%,#10a285 50.0%,#10a47f 53.1%,#10a673 56.2%,#10ae5e 59.4%,#10be39 62.5%,#10bb40 65.6%,#10b749 68.8%,#10b155 71.9%,#10ac61 75.0%,#10a76e 78.1%,#10a479 81.2%,#10a384 84.4%,#10a18d 87.5%,#109f95 90.6%,#109e9c 93.8%,#109da1 96.9%,#109ca6 100.0%)"></div><div class="a" style="left:205px;top:184px;width:305px;height:4px;background:linear-gradient(to right,#109baa 0.0%,#109ca5 3.1%,#109ea0 6.2%,#109e9a 9.4%,#10a092 12.5%,#10a189 15.6%,#10a47f 18.8%,#10a674 21.9%,#10a868 25.0%,#10ae5c 28.1%,#10b352 31.2%,#10b749 34.4%,#10ba42 37.5%,#10ae5e 40.6%,#10a575 43.8%,#10a382 46.9%,#10a288 50.0%,#10a382 53.1%,#10a575 56.2%,#10ad5f 59.4%,#10ba42 62.5%,#10b749 65.6%,#10b351 68.8%,#10ae5c 71.9%,#10a968 75.0%,#10a674 78.1%,#10a47e 81.2%,#10a189 84.4%,#10a091 87.5%,#109e99 90.6%,#109ea0 93.8%,#109ca5 96.9%,#109baa 100.0%)"></div><div class="a" style="left:205px;top:188px;width:305px;height:4px;background:linear-gradient(to right,#109bae 0.0%,#109bab 3.1%,#109ca5 6.2%,#109e9e 9.4%,#109f98 12.5%,#10a18f 15.6%,#10a285 18.8%,#10a47b 21.9%,#10a770 25.0%,#10aa65 28.1%,#10ae5b 31.2%,#10b252 34.4%,#10b54c 37.5%,#10ae5c 40.6%,#10a578 43.8%,#10a285 46.9%,#10a18b 50.0%,#10a285 53.1%,#10a578 56.2%,#10ae5c 59.4%,#10b54c 62.5%,#10b252 65.6%,#10ae5b 68.8%,#10aa65 71.9%,#10a770 75.0%,#10a47b 78.1%,#10a285 81.2%,#10a18f 84.4%,#109f98 87.5%,#109e9e 90.6%,#109da5 93.8%,#109baa 96.9%,#109bae 100.0%)"></div><div class="a" style="left:205px;top:192px;width:305px;height:4px;background:linear-gradient(to right,#1099b3 0.0%,#109bb0 3.1%,#109bab 6.2%,#109ca5 9.4%,#109e9e 12.5%,#109f96 15.6%,#10a18d 18.8%,#10a384 21.9%,#10a479 25.0%,#10a76f 28.1%,#10aa66 31.2%,#10ae5e 34.4%,#10b058 37.5%,#10b155 40.6%,#10a578 43.8%,#10a288 46.9%,#10a18e 50.0%,#10a288 53.1%,#10a479 56.2%,#10b155 59.4%,#10b058 62.5%,#10ae5e 65.6%,#10aa65 68.8%,#10a76f 71.9%,#10a479 75.0%,#10a383 78.1%,#10a18d 81.2%,#109f96 84.4%,#109e9e 87.5%,#109da4 90.6%,#109bab 93.8%,#109bb0 96.9%,#1099b3 100.0%)"></div><div class="a" style="left:205px;top:196px;width:305px;height:4px;background:linear-gradient(to right,#1095b5 0.0%,#1098b4 3.1%,#109ab1 6.2%,#109bac 9.4%,#109ca5 12.5%,#109e9e 15.6%,#109f96 18.8%,#10a18d 21.9%,#10a383 25.0%,#10a47a 28.1%,#10a672 31.2%,#10a86b 34.4%,#10aa65 37.5%,#10ab62 40.6%,#10a576 43.8%,#10a288 46.9%,#10a18f 50.0%,#10a288 53.1%,#10a577 56.2%,#10ab62 59.4%,#10ab65 62.5%,#10a86a 65.6%,#10a672 68.8%,#10a47a 71.9%,#10a383 75.0%,#10a18c 78.1%,#109f95 81.2%,#109e9e 84.4%,#109ca5 87.5%,#109bac 90.6%,#109ab1 93.8%,#1098b4 96.9%,#1095b4 100.0%)"></div><div class="a" style="left:205px;top:200px;width:305px;height:4px;background:linear-gradient(to right,#1091b7 0.0%,#1094b6 3.1%,#1096b4 6.2%,#109ab3 9.4%,#109bae 12.5%,#109ca7 15.6%,#109e9f 18.8%,#109f97 21.9%,#10a18e 25.0%,#10a285 28.1%,#10a47e 31.2%,#10a578 34.4%,#10a672 37.5%,#10a76f 40.6%,#10a76e 43.8%,#10a285 46.9%,#10a18e 50.0%,#10a285 53.1%,#10a76e 56.2%,#10a76f 59.4%,#10a672 62.5%,#10a577 65.6%,#10a47e 68.8%,#10a285 71.9%,#10a18e 75.0%,#109f97 78.1%,#109e9f 81.2%,#109ca7 84.4%,#109bae 87.5%,#109ab3 90.6%,#1097b4 93.8%,#1094b5 96.9%,#1091b7 100.0%)"></div><div class="a" style="left:205px;top:204px;width:305px;height:4px;background:linear-gradient(to right,#108db8 0.0%,#108fb7 3.1%,#1091b7 6.2%,#1095b5 9.4%,#1098b4 12.5%,#109bb0 15.6%,#109ca9 18.8%,#109da1 21.9%,#109e9a 25.0%,#10a091 28.1%,#10a18b 31.2%,#10a385 34.4%,#10a480 37.5%,#10a47d 40.6%,#10a47b 43.8%,#10a47c 46.9%,#10a47d 50.0%,#10a47c 53.1%,#10a47b 56.2%,#10a47d 59.4%,#10a480 62.5%,#10a385 65.6%,#10a18b 68.8%,#10a091 71.9%,#109e99 75.0%,#109da1 78.1%,#109ca9 81.2%,#109bb0 84.4%,#1098b4 87.5%,#1095b5 90.6%,#1091b7 93.8%,#108fb7 96.9%,#108db8 100.0%)"></div><div class="a" style="left:205px;top:208px;width:305px;height:4px;background:linear-gradient(to right,#1088bb 0.0%,#108bba 3.1%,#108db9 6.2%,#108fb7 9.4%,#1092b6 12.5%,#1096b4 15.6%,#109ab3 18.8%,#109bac 21.9%,#109ca5 25.0%,#109e9e 28.1%,#109f98 31.2%,#10a092 34.4%,#10a18e 37.5%,#10a18b 40.6%,#10a18a 43.8%,#10a18a 46.9%,#10a18b 50.0%,#10a18a 53.1%,#10a18a 56.2%,#10a18b 59.4%,#10a18e 62.5%,#10a092 65.6%,#109f98 68.8%,#109e9e 71.9%,#109ca5 75.0%,#109bac 78.1%,#109ab3 81.2%,#1096b4 84.4%,#1092b6 87.5%,#108fb7 90.6%,#108db9 93.8%,#108bba 96.9%,#1088bb 100.0%)"></div><div class="a" style="left:205px;top:212px;width:305px;height:4px;background:linear-gradient(to right,#1084bd 0.0%,#1085bc 3.1%,#1088bb 6.2%,#108aba 9.4%,#108db9 12.5%,#1090b7 15.6%,#1093b6 18.8%,#1097b4 21.9%,#109ab1 25.0%,#109bab 28.1%,#109ca5 31.2%,#109ea1 34.4%,#109e9d 37.5%,#109e9a 40.6%,#109f98 43.8%,#109f98 46.9%,#109e99 50.0%,#109f98 53.1%,#109f98 56.2%,#109e9a 59.4%,#109e9d 62.5%,#109ea1 65.6%,#109ca5 68.8%,#109bab 71.9%,#109ab1 75.0%,#1097b4 78.1%,#1093b6 81.2%,#1090b7 84.4%,#108db9 87.5%,#108aba 90.6%,#1088bb 93.8%,#1085bc 96.9%,#1084bd 100.0%)"></div><div class="a" style="left:205px;top:216px;width:305px;height:4px;background:linear-gradient(to right,#107dbd 0.0%,#107fbd 3.1%,#1082bd 6.2%,#1085bc 9.4%,#1087bb 12.5%,#108aba 15.6%,#108db9 18.8%,#1090b7 21.9%,#1094b6 25.0%,#1097b4 28.1%,#109ab3 31.2%,#109bae 34.4%,#109bab 37.5%,#109ca8 40.6%,#109ca7 43.8%,#109ca7 46.9%,#109ca8 50.0%,#109ca7 53.1%,#109ca7 56.2%,#109ca8 59.4%,#109bab 62.5%,#109bae 65.6%,#109ab3 68.8%,#1097b4 71.9%,#1094b6 75.0%,#1090b7 78.1%,#108db8 81.2%,#108aba 84.4%,#1087bb 87.5%,#1085bc 90.6%,#1082bd 93.8%,#107fbd 96.9%,#107dbd 100.0%)"></div><div class="a" style="left:205px;top:220px;width:305px;height:4px;background:linear-gradient(to right,#1078be 0.0%,#107abe 3.1%,#107cbe 6.2%,#107dbd 9.4%,#1080bd 12.5%,#1084bd 15.6%,#1086bb 18.8%,#1089bb 21.9%,#108cb9 25.0%,#108fb7 28.1%,#1091b7 31.2%,#1095b5 34.4%,#1096b4 37.5%,#1098b4 40.6%,#1098b4 43.8%,#1098b4 46.9%,#1098b4 50.0%,#1098b4 53.1%,#1098b4 56.2%,#1098b4 59.4%,#1096b4 62.5%,#1095b5 65.6%,#1091b7 68.8%,#108fb7 71.9%,#108cb9 75.0%,#1089bb 78.1%,#1086bb 81.2%,#1084bd 84.4%,#1080bd 87.5%,#107dbd 90.6%,#107cbe 93.8%,#107abe 96.9%,#1078be 100.0%)"></div><div class="a" style="left:205px;top:224px;width:305px;height:4px;background:linear-gradient(to right,#1072bf 0.0%,#1074be 3.1%,#1075be 6.2%,#1077be 9.4%,#107abe 12.5%,#107cbd 15.6%,#107fbd 18.8%,#1082bd 21.9%,#1085bc 25.0%,#1088bb 28.1%,#108aba 31.2%,#108cb9 34.4%,#108eb8 37.5%,#108fb7 40.6%,#1090b7 43.8%,#1090b7 46.9%,#1090b7 50.0%,#1090b7 53.1%,#1090b7 56.2%,#108fb7 59.4%,#108eb8 62.5%,#108cb9 65.6%,#108aba 68.8%,#1088bb 71.9%,#1085bc 75.0%,#1082bd 78.1%,#107fbd 81.2%,#107cbd 84.4%,#107abe 87.5%,#1077be 90.6%,#1075be 93.8%,#1074be 96.9%,#1072bf 100.0%)"></div><div class="a" style="left:205px;top:228px;width:305px;height:4px;background:linear-gradient(to right,#106cbf 0.0%,#106ebf 3.1%,#106ebf 6.2%,#1070be 9.4%,#1073be 12.5%,#1075be 15.6%,#1077be 18.8%,#107abd 21.9%,#107dbd 25.0%,#107fbd 28.1%,#1082bd 31.2%,#1084bd 34.4%,#1085bc 37.5%,#1087bb 40.6%,#1088bb 43.8%,#1088bb 46.9%,#1088bb 50.0%,#1088bb 53.1%,#1088bb 56.2%,#1087bb 59.4%,#1085bc 62.5%,#1084bd 65.6%,#1082bd 68.8%,#107fbd 71.9%,#107dbd 75.0%,#107abd 78.1%,#1077be 81.2%,#1075be 84.4%,#1073be 87.5%,#1071bf 90.6%,#106ebf 93.8%,#106ebf 96.9%,#106cbf 100.0%)"></div><div class="a" style="left:205px;top:232px;width:305px;height:4px;background:linear-gradient(to right,#1066be 0.0%,#1067be 3.1%,#1068bf 6.2%,#106abf 9.4%,#106cbf 12.5%,#106ebf 15.6%,#1070be 18.8%,#1073be 21.9%,#1075be 25.0%,#1077be 28.1%,#1079be 31.2%,#107bbd 34.4%,#107dbd 37.5%,#107dbd 40.6%,#107ebd 43.8%,#107fbd 46.9%,#107fbd 50.0%,#107fbd 53.1%,#107ebd 56.2%,#107dbd 59.4%,#107dbd 62.5%,#107bbe 65.6%,#1079be 68.8%,#1077be 71.9%,#1075be 75.0%,#1073be 78.1%,#1070be 81.2%,#106ebf 84.4%,#106cbf 87.5%,#106abf 90.6%,#1068bf 93.8%,#1067be 96.9%,#1066be 100.0%)"></div><div class="a" style="left:205px;top:236px;width:305px;height:4px;background:linear-gradient(to right,#105fbc 0.0%,#1061bd 3.1%,#1062bd 6.2%,#1063bd 9.4%,#1065be 12.5%,#1067be 15.6%,#1069bf 18.8%,#106bbf 21.9%,#106dbf 25.0%,#106fbf 28.1%,#1071bf 31.2%,#1073be 34.4%,#1074bf 37.5%,#1075be 40.6%,#1075be 43.8%,#1076be 46.9%,#1076be 50.0%,#1076be 53.1%,#1075be 56.2%,#1075be 59.4%,#1074bf 62.5%,#1073be 65.6%,#1071bf 68.8%,#106fbf 71.9%,#106dbf 75.0%,#106bbf 78.1%,#1069bf 81.2%,#1067be 84.4%,#1065be 87.5%,#1063bd 90.6%,#1062bd 93.8%,#1061bd 96.9%,#105fbc 100.0%)"></div><div class="a" style="left:205px;top:240px;width:305px;height:4px;background:linear-gradient(to right,#105abb 0.0%,#105bbb 3.1%,#105cbb 6.2%,#105dbc 9.4%,#105fbc 12.5%,#1060bc 15.6%,#1062bd 18.8%,#1064bd 21.9%,#1065be 25.0%,#1068be 28.1%,#1069bf 31.2%,#106abf 34.4%,#106cbf 37.5%,#106dbf 40.6%,#106ebf 43.8%,#106ebf 46.9%,#106ebf 50.0%,#106ebf 53.1%,#106ebf 56.2%,#106dbf 59.4%,#106cbf 62.5%,#106abf 65.6%,#1069bf 68.8%,#1068be 71.9%,#1065be 75.0%,#1064bd 78.1%,#1062bd 81.2%,#1060bc 84.4%,#105fbc 87.5%,#105dbc 90.6%,#105cbb 93.8%,#105bbb 96.9%,#105abb 100.0%)"></div><div class="a" style="left:205px;top:244px;width:305px;height:4px;background:linear-gradient(to right,#1054b9 0.0%,#1055b9 3.1%,#1056ba 6.2%,#1057ba 9.4%,#1058ba 12.5%,#105abb 15.6%,#105bbb 18.8%,#105dbb 21.9%,#105fbc 25.0%,#105fbc 28.1%,#1061bd 31.2%,#1063bd 34.4%,#1063bd 37.5%,#1064be 40.6%,#1065be 43.8%,#1065be 46.9%,#1065be 50.0%,#1065be 53.1%,#1065be 56.2%,#1064be 59.4%,#1063bd 62.5%,#1063bd 65.6%,#1061bd 68.8%,#105fbc 71.9%,#105fbc 75.0%,#105dbb 78.1%,#105bbb 81.2%,#105abb 84.4%,#1058ba 87.5%,#1057ba 90.6%,#1056ba 93.8%,#1055b9 96.9%,#1054b9 100.0%)"></div><div class="a" style="left:205px;top:248px;width:305px;height:4px;background:linear-gradient(to right,#104fb8 0.0%,#104fb8 3.1%,#1050b8 6.2%,#1052b8 9.4%,#1053b9 12.5%,#1053b9 15.6%,#1055b9 18.8%,#1056ba 21.9%,#1057ba 25.0%,#1059ba 28.1%,#105abb 31.2%,#105bbb 34.4%,#105cbb 37.5%,#105dbc 40.6%,#105dbc 43.8%,#105ebc 46.9%,#105ebc 50.0%,#105ebc 53.1%,#105dbc 56.2%,#105dbc 59.4%,#105cbb 62.5%,#105bbb 65.6%,#105abb 68.8%,#1059ba 71.9%,#1057ba 75.0%,#1056ba 78.1%,#1055b9 81.2%,#1053b9 84.4%,#1053b9 87.5%,#1052b8 90.6%,#1050b8 93.8%,#104fb8 96.9%,#104fb8 100.0%)"></div><div class="a" style="left:205px;top:252px;width:305px;height:4px;background:linear-gradient(to right,#104ab6 0.0%,#104bb7 3.1%,#104bb7 6.2%,#104cb7 9.4%,#104db7 12.5%,#104eb8 15.6%,#104fb8 18.8%,#1050b8 21.9%,#1051b8 25.0%,#1052b9 28.1%,#1053b9 31.2%,#1054b9 34.4%,#1055b9 37.5%,#1056ba 40.6%,#1056ba 43.8%,#1056ba 46.9%,#1056ba 50.0%,#1056ba 53.1%,#1056ba 56.2%,#1056ba 59.4%,#1055b9 62.5%,#1054b9 65.6%,#1053b9 68.8%,#1052b9 71.9%,#1051b8 75.0%,#1050b8 78.1%,#104fb8 81.2%,#104eb8 84.4%,#104db7 87.5%,#104cb7 90.6%,#104bb7 93.8%,#104bb7 96.9%,#104ab6 100.0%)"></div><div class="a" style="left:205px;top:256px;width:305px;height:4px;background:linear-gradient(to right,#1045b5 0.0%,#1046b5 3.1%,#1046b5 6.2%,#1047b6 9.4%,#1048b6 12.5%,#1048b6 15.6%,#104ab6 18.8%,#104bb7 21.9%,#104bb7 25.0%,#104cb7 28.1%,#104db7 31.2%,#104eb8 34.4%,#104fb8 37.5%,#104fb8 40.6%,#104fb8 43.8%,#1050b8 46.9%,#1050b8 50.0%,#1050b8 53.1%,#104fb8 56.2%,#104fb8 59.4%,#104fb8 62.5%,#104eb8 65.6%,#104db7 68.8%,#104cb7 71.9%,#104bb7 75.0%,#104bb7 78.1%,#104ab6 81.2%,#1048b6 84.4%,#1048b6 87.5%,#1047b6 90.6%,#1046b5 93.8%,#1046b5 96.9%,#1045b5 100.0%)"></div><div class="a" style="left:205px;top:260px;width:305px;height:4px;background:linear-gradient(to right,#1041b4 0.0%,#1042b4 3.1%,#1042b4 6.2%,#1042b4 9.4%,#1043b5 12.5%,#1044b5 15.6%,#1045b5 18.8%,#1045b5 21.9%,#1046b5 25.0%,#1047b6 28.1%,#1048b6 31.2%,#1048b6 34.4%,#1049b6 37.5%,#1049b6 40.6%,#104ab6 43.8%,#104ab6 46.9%,#104ab6 50.0%,#104ab6 53.1%,#104ab6 56.2%,#1049b6 59.4%,#1049b6 62.5%,#1048b6 65.6%,#1048b6 68.8%,#1047b6 71.9%,#1046b5 75.0%,#1045b5 78.1%,#1045b5 81.2%,#1044b5 84.4%,#1043b5 87.5%,#1042b4 90.6%,#1042b4 93.8%,#1042b4 96.9%,#1041b4 100.0%)"></div><div class="a" style="left:205px;top:264px;width:305px;height:4px;background:linear-gradient(to right,#103db3 0.0%,#103db3 3.1%,#103eb3 6.2%,#103eb3 9.4%,#103fb3 12.5%,#103fb3 15.6%,#1040b4 18.8%,#1041b4 21.9%,#1042b4 25.0%,#1042b4 28.1%,#1042b4 31.2%,#1043b5 34.4%,#1044b5 37.5%,#1044b5 40.6%,#1045b5 43.8%,#1045b5 46.9%,#1045b5 50.0%,#1045b5 53.1%,#1045b5 56.2%,#1044b5 59.4%,#1044b5 62.5%,#1043b5 65.6%,#1042b4 68.8%,#1042b4 71.9%,#1042b4 75.0%,#1041b4 78.1%,#1040b4 81.2%,#103fb3 84.4%,#103fb3 87.5%,#103fb3 90.6%,#103eb3 93.8%,#103db3 96.9%,#103db3 100.0%)"></div><div class="a" style="left:205px;top:268px;width:305px;height:4px;background:linear-gradient(to right,#1039b2 0.0%,#1039b2 3.1%,#103ab2 6.2%,#103ab2 9.4%,#103bb2 12.5%,#103bb2 15.6%,#103cb2 18.8%,#103cb3 21.9%,#103db3 25.0%,#103db3 28.1%,#103eb3 31.2%,#103fb3 34.4%,#103fb3 37.5%,#103fb3 40.6%,#103fb3 43.8%,#103fb3 46.9%,#103fb4 50.0%,#103fb3 53.1%,#103fb3 56.2%,#103fb3 59.4%,#103fb3 62.5%,#103fb3 65.6%,#103eb3 68.8%,#103db3 71.9%,#103db3 75.0%,#103cb3 78.1%,#103cb2 81.2%,#103cb2 84.4%,#103bb2 87.5%,#103ab2 90.6%,#103ab2 93.8%,#1039b2 96.9%,#1039b2 100.0%)"></div><div class="a" style="left:205px;top:272px;width:305px;height:4px;background:linear-gradient(to right,#1036b1 0.0%,#1036b1 3.1%,#1036b1 6.2%,#1037b1 9.4%,#1037b1 12.5%,#1037b1 15.6%,#1038b1 18.8%,#1039b1 21.9%,#1039b2 25.0%,#1039b2 28.1%,#1039b2 31.2%,#103ab2 34.4%,#103ab2 37.5%,#103bb2 40.6%,#103bb2 43.8%,#103bb2 46.9%,#103bb2 50.0%,#103bb2 53.1%,#103bb2 56.2%,#103bb2 59.4%,#103ab2 62.5%,#103ab2 65.6%,#1039b2 68.8%,#1039b2 71.9%,#1039b2 75.0%,#1039b1 78.1%,#1038b1 81.2%,#1037b1 84.4%,#1037b1 87.5%,#1037b1 90.6%,#1036b1 93.8%,#1036b1 96.9%,#1036b1 100.0%)"></div><div class="a" style="left:205px;top:276px;width:305px;height:4px;background:linear-gradient(to right,#1033b0 0.0%,#1033b0 3.1%,#1033b1 6.2%,#1034b1 9.4%,#1034b1 12.5%,#1034b1 15.6%,#1034b1 18.8%,#1035b0 21.9%,#1035b1 25.0%,#1036b1 28.1%,#1036b1 31.2%,#1036b1 34.4%,#1037b1 37.5%,#1037b1 40.6%,#1037b1 43.8%,#1037b1 46.9%,#1037b1 50.0%,#1037b1 53.1%,#1037b1 56.2%,#1037b1 59.4%,#1037b1 62.5%,#1036b1 65.6%,#1036b1 68.8%,#1036b1 71.9%,#1035b1 75.0%,#1035b0 78.1%,#1034b1 81.2%,#1034b1 84.4%,#1034b1 87.5%,#1034b1 90.6%,#1033b1 93.8%,#1033b0 96.9%,#1033b0 100.0%)"></div><div class="a" style="left:205px;top:280px;width:305px;height:4px;background:linear-gradient(to right,#1030b0 0.0%,#1030b0 3.1%,#1030b0 6.2%,#1031b0 9.4%,#1031b0 12.5%,#1031b0 15.6%,#1031b0 18.8%,#1031b0 21.9%,#1032b0 25.0%,#1032b0 28.1%,#1033b0 31.2%,#1033b0 34.4%,#1033b1 37.5%,#1034b1 40.6%,#1034b1 43.8%,#1034b1 46.9%,#1034b1 50.0%,#1034b1 53.1%,#1034b1 56.2%,#1034b1 59.4%,#1033b1 62.5%,#1033b0 65.6%,#1033b0 68.8%,#1032b0 71.9%,#1032b0 75.0%,#1031b0 78.1%,#1031b0 81.2%,#1031b0 84.4%,#1031b0 87.5%,#1031b0 90.6%,#1030b0 93.8%,#1030b0 96.9%,#1030b0 100.0%)"></div><div class="a" style="left:205px;top:284px;width:305px;height:4px;background:linear-gradient(to right,#102daf 0.0%,#102daf 3.1%,#102eaf 6.2%,#102eaf 9.4%,#102eaf 12.5%,#102faf 15.6%,#102faf 18.8%,#102faf 21.9%,#102faf 25.0%,#102faf 28.1%,#1030af 31.2%,#1030b0 34.4%,#1030b0 37.5%,#1030b0 40.6%,#1030b0 43.8%,#1031b0 46.9%,#1031b0 50.0%,#1031b0 53.1%,#1030b0 56.2%,#1030b0 59.4%,#1030b0 62.5%,#1030b0 65.6%,#1030af 68.8%,#102faf 71.9%,#102faf 75.0%,#102faf 78.1%,#102faf 81.2%,#102faf 84.4%,#102eaf 87.5%,#102eaf 90.6%,#102eaf 93.8%,#102daf 96.9%,#102daf 100.0%)"></div><div class="a" style="left:205px;top:288px;width:305px;height:4px;background:linear-gradient(to right,#102baf 0.0%,#102baf 3.1%,#102baf 6.2%,#102caf 9.4%,#102caf 12.5%,#102caf 15.6%,#102dae 18.8%,#102dae 21.9%,#102daf 25.0%,#102daf 28.1%,#102daf 31.2%,#102daf 34.4%,#102daf 37.5%,#102daf 40.6%,#102eaf 43.8%,#102eaf 46.9%,#102eaf 50.0%,#102eaf 53.1%,#102eaf 56.2%,#102daf 59.4%,#102daf 62.5%,#102daf 65.6%,#102daf 68.8%,#102daf 71.9%,#102daf 75.0%,#102dae 78.1%,#102dae 81.2%,#102caf 84.4%,#102caf 87.5%,#102caf 90.6%,#102baf 93.8%,#102baf 96.9%,#102baf 100.0%)"></div><div class="a" style="left:205px;top:292px;width:305px;height:4px;background:linear-gradient(to right,#1029ae 0.0%,#1029ae 3.1%,#1029ae 6.2%,#102aae 9.4%,#102aae 12.5%,#102aae 15.6%,#102aae 18.8%,#102aae 21.9%,#102aae 25.0%,#102aaf 28.1%,#102aaf 31.2%,#102baf 34.4%,#102baf 37.5%,#102baf 40.6%,#102baf 43.8%,#102baf 46.9%,#102baf 50.0%,#102baf 53.1%,#102baf 56.2%,#102baf 59.4%,#102baf 62.5%,#102baf 65.6%,#102aaf 68.8%,#102aaf 71.9%,#102aae 75.0%,#102aae 78.1%,#102aae 81.2%,#102aae 84.4%,#102aae 87.5%,#102aae 90.6%,#1029ae 93.8%,#1029ae 96.9%,#1029ae 100.0%)"></div><div class="a" style="left:205px;top:296px;width:305px;height:4px;background:linear-gradient(to right,#1027ad 0.0%,#1027ae 3.1%,#1028ae 6.2%,#1028ae 9.4%,#1028ae 12.5%,#1028ae 15.6%,#1028ae 18.8%,#1028ae 21.9%,#1028ae 25.0%,#1028ae 28.1%,#1028ae 31.2%,#1029ae 34.4%,#1029ae 37.5%,#1029ae 40.6%,#1029ae 43.8%,#1029ae 46.9%,#1029ae 50.0%,#1029ae 53.1%,#1029ae 56.2%,#1029ae 59.4%,#1029ae 62.5%,#1029ae 65.6%,#1028ae 68.8%,#1028ae 71.9%,#1028ae 75.0%,#1028ae 78.1%,#1028ae 81.2%,#1028ae 84.4%,#1028ae 87.5%,#1028ae 90.6%,#1028ae 93.8%,#1027ae 96.9%,#1027ad 100.0%)"></div><div class="a" style="left:205px;top:300px;width:305px;height:4px;background:linear-gradient(to right,#1026ad 0.0%,#1026ad 3.1%,#1026ad 6.2%,#1026ad 9.4%,#1026ad 12.5%,#1026ad 15.6%,#1026ad 18.8%,#1026ad 21.9%,#1026ad 25.0%,#1026ad 28.1%,#1027ad 31.2%,#1027ad 34.4%,#1027ad 37.5%,#1027ad 40.6%,#1027ad 43.8%,#1027ad 46.9%,#1027ad 50.0%,#1027ad 53.1%,#1027ad 56.2%,#1027ad 59.4%,#1027ad 62.5%,#1027ad 65.6%,#1027ad 68.8%,#1026ad 71.9%,#1026ad 75.0%,#1026ad 78.1%,#1026ad 81.2%,#1026ad 84.4%,#1026ad 87.5%,#1026ad 90.6%,#1026ad 93.8%,#1026ad 96.9%,#1026ad 100.0%)"></div><div class="a" style="left:205px;top:304px;width:305px;height:4px;background:linear-gradient(to right,#1024ad 0.0%,#1024ad 3.1%,#1024ad 6.2%,#1024ad 9.4%,#1024ad 12.5%,#1025ad 15.6%,#1025ad 18.8%,#1025ad 21.9%,#1025ad 25.0%,#1025ad 28.1%,#1025ad 31.2%,#1025ad 34.4%,#1026ad 37.5%,#1026ad 40.6%,#1026ad 43.8%,#1026ad 46.9%,#1026ad 50.0%,#1026ad 53.1%,#1026ad 56.2%,#1026ad 59.4%,#1026ad 62.5%,#1025ad 65.6%,#1025ad 68.8%,#1025ad 71.9%,#1025ad 75.0%,#1025ad 78.1%,#1025ad 81.2%,#1025ad 84.4%,#1024ad 87.5%,#1024ad 90.6%,#1024ad 93.8%,#1024ad 96.9%,#1024ad 100.0%)"></div><div class="a" style="left:205px;top:308px;width:305px;height:4px;background:linear-gradient(to right,#1023ad 0.0%,#1023ad 3.1%,#1023ad 6.2%,#1023ad 9.4%,#1023ad 12.5%,#1024ad 15.6%,#1024ad 18.8%,#1024ad 21.9%,#1024ad 25.0%,#1024ac 28.1%,#1024ac 31.2%,#1024ac 34.4%,#1024ac 37.5%,#1024ac 40.6%,#1024ac 43.8%,#1024ac 46.9%,#1024ac 50.0%,#1024ac 53.1%,#1024ac 56.2%,#1024ac 59.4%,#1024ac 62.5%,#1024ac 65.6%,#1024ac 68.8%,#1024ac 71.9%,#1024ad 75.0%,#1024ad 78.1%,#1024ad 81.2%,#1024ad 84.4%,#1023ad 87.5%,#1023ad 90.6%,#1023ad 93.8%,#1023ad 96.9%,#1023ad 100.0%)"></div><div class="a" style="left:205px;top:312px;width:305px;height:4px;background:linear-gradient(to right,#1022ac 0.0%,#1022ac 3.1%,#1022ac 6.2%,#1022ac 9.4%,#1022ac 12.5%,#1022ac 15.6%,#1022ad 18.8%,#1022ad 21.9%,#1022ad 25.0%,#1022ad 28.1%,#1022ad 31.2%,#1022ad 34.4%,#1023ad 37.5%,#1023ad 40.6%,#1023ad 43.8%,#1023ad 46.9%,#1023ad 50.0%,#1023ad 53.1%,#1023ad 56.2%,#1023ad 59.4%,#1023ad 62.5%,#1022ad 65.6%,#1022ad 68.8%,#1022ad 71.9%,#1022ad 75.0%,#1022ad 78.1%,#1022ad 81.2%,#1022ac 84.4%,#1022ac 87.5%,#1022ac 90.6%,#1022ac 93.8%,#1022ac 96.9%,#1022ac 100.0%)"></div><div class="a" style="left:205px;top:316px;width:305px;height:2px;background:linear-gradient(to right,#1021ac 0.0%,#1021ac 3.1%,#1021ac 6.2%,#1021ac 9.4%,#1022ac 12.5%,#1022ac 15.6%,#1022ac 18.8%,#1022ac 21.9%,#1022ac 25.0%,#1022ac 28.1%,#1022ac 31.2%,#1022ac 34.4%,#1022ac 37.5%,#1022ac 40.6%,#1022ac 43.8%,#1022ac 46.9%,#1022ac 50.0%,#1022ac 53.1%,#1022ac 56.2%,#1022ac 59.4%,#1022ac 62.5%,#1022ac 65.6%,#1022ac 68.8%,#1022ac 71.9%,#1022ac 75.0%,#1022ac 78.1%,#1022ac 81.2%,#1022ac 84.4%,#1022ac 87.5%,#1021ac 90.6%,#1021ac 93.8%,#1021ac 96.9%,#1021ac 100.0%)"></div>
<svg width="305" height="302" style="left:205px;top:16px"><path d="M1.20 0V302M4.60 0V302M8.00 0V302M11.40 0V302M14.80 0V302M18.20 0V302M21.60 0V302M25.00 0V302M28.40 0V302M31.80 0V302M35.20 0V302M38.60 0V302M42.00 0V302M45.40 0V302M48.80 0V302M52.20 0V302M55.60 0V302M59.00 0V302M62.40 0V302M65.80 0V302M69.20 0V302M72.60 0V302M76.00 0V302M79.40 0V302M82.80 0V302M86.20 0V302M89.60 0V302M93.00 0V302M96.40 0V302M99.80 0V302M103.20 0V302M106.60 0V302M110.00 0V302M113.40 0V302M116.80 0V302M120.20 0V302M123.60 0V302M127.00 0V302M130.40 0V302M133.80 0V302M137.20 0V302M140.60 0V302M144.00 0V302M147.40 0V302M150.80 0V302M154.20 0V302M157.60 0V302M161.00 0V302M164.40 0V302M167.80 0V302M171.20 0V302M174.60 0V302M178.00 0V302M181.40 0V302M184.80 0V302M188.20 0V302M191.60 0V302M195.00 0V302M198.40 0V302M201.80 0V302M205.20 0V302M208.60 0V302M212.00 0V302M215.40 0V302M218.80 0V302M222.20 0V302M225.60 0V302M229.00 0V302M232.40 0V302M235.80 0V302M239.20 0V302M242.60 0V302M246.00 0V302M249.40 0V302M252.80 0V302M256.20 0V302M259.60 0V302M263.00 0V302M266.40 0V302M269.80 0V302M273.20 0V302M276.60 0V302M280.00 0V302M283.40 0V302M286.80 0V302M290.20 0V302M293.60 0V302M297.00 0V302M300.40 0V302M303.80 0V302M0 1.20H305M0 4.60H305M0 8.00H305M0 11.40H305M0 14.80H305M0 18.20H305M0 21.60H305M0 25.00H305M0 28.40H305M0 31.80H305M0 35.20H305M0 38.60H305M0 42.00H305M0 45.40H305M0 48.80H305M0 52.20H305M0 55.60H305M0 59.00H305M0 62.40H305M0 65.80H305M0 69.20H305M0 72.60H305M0 76.00H305M0 79.40H305M0 82.80H305M0 86.20H305M0 89.60H305M0 93.00H305M0 96.40H305M0 99.80H305M0 103.20H305M0 106.60H305M0 110.00H305M0 113.40H305M0 116.80H305M0 120.20H305M0 123.60H305M0 127.00H305M0 130.40H305M0 133.80H305M0 137.20H305M0 140.60H305M0 144.00H305M0 147.40H305M0 150.80H305M0 154.20H305M0 157.60H305M0 161.00H305M0 164.40H305M0 167.80H305M0 171.20H305M0 174.60H305M0 178.00H305M0 181.40H305M0 184.80H305M0 188.20H305M0 191.60H305M0 195.00H305M0 198.40H305M0 201.80H305M0 205.20H305M0 208.60H305M0 212.00H305M0 215.40H305M0 218.80H305M0 222.20H305M0 225.60H305M0 229.00H305M0 232.40H305M0 235.80H305M0 239.20H305M0 242.60H305M0 246.00H305M0 249.40H305M0 252.80H305M0 256.20H305M0 259.60H305M0 263.00H305M0 266.40H305M0 269.80H305M0 273.20H305M0 276.60H305M0 280.00H305M0 283.40H305M0 286.80H305M0 290.20H305M0 293.60H305M0 297.00H305M0 300.40H305" stroke="rgba(0,0,0,0.42)" stroke-width="1" fill="none" shape-rendering="crispEdges"/><path d="M10.60 0V302M27.70 0V302M37.70 0V302M54.90 0V302M62.70 0V302M80.10 0V302M90.30 0V302M107.60 0V302M117.40 0V302M134.80 0V302M145.60 0V302M171.00 0V302M179.90 0V302M197.60 0V302M207.50 0V302M224.10 0V302M234.10 0V302M251.80 0V302M260.60 0V302M278.30 0V302M287.20 0V302M303.80 0V302M0 10.70H305M0 27.30H305M0 44.80H305M0 62.40H305M0 79.90H305M0 97.50H305M0 115.00H305M0 132.60H305M0 169.50H305M0 187.00H305M0 204.50H305M0 222.00H305M0 239.50H305M0 257.00H305M0 274.50H305M0 292.00H305" stroke="rgba(0,0,0,0.55)" stroke-width="1" fill="none" shape-rendering="crispEdges"/><path d="M152.6 0V302M0 152.2H305" stroke="rgba(0,0,0,0.7)" stroke-width="1" fill="none"/><rect x="0" y="0" width="305" height="4" fill="rgba(0,0,20,0.55)"/><circle cx="152.6" cy="152.2" r="37.6" stroke="#080808" stroke-width="1.5" fill="none"/></svg>
<div class="a" style="left:9px;top:31.5px;width:18px;height:208.0px;background:linear-gradient(to bottom,#ff0000 0.0%,#ff1500 2.5%,#ff2b00 5.0%,#ff4000 7.5%,#ff5500 10.0%,#ff6c00 12.5%,#ff8200 15.0%,#ff9900 17.5%,#ffaf00 20.0%,#ffd700 22.5%,#ffff00 25.0%,#e4ff00 27.5%,#c8ff00 30.0%,#aaff00 32.5%,#8cff00 35.0%,#6eff00 37.5%,#50ff00 40.0%,#3cfc05 42.5%,#28fa0a 45.0%,#14f80f 47.5%,#00f514 50.0%,#00ea2d 52.5%,#00de46 55.0%,#00d35f 57.5%,#00c878 60.0%,#00c490 62.5%,#00bfa8 65.0%,#00babf 67.5%,#00b6d7 70.0%,#00a8dd 72.5%,#009ae4 75.0%,#008bea 77.5%,#007df0 80.0%,#006df0 82.5%,#005ef0 85.0%,#004ef0 87.5%,#003ef0 90.0%,#002ef1 92.5%,#001ff2 95.0%,#0010f4 97.5%,#0000f5 100.0%)"></div><span class="lbl" style="left:28.5px;top:29.1px;font-size:9.5px">1 and &gt;</span><div class="a" style="left:9px;top:51.8px;width:3px;height:1px;background:rgba(220,150,170,0.9)"></div><span class="lbl" style="left:28.5px;top:49.9px;font-size:9.5px">0.9</span><div class="a" style="left:9px;top:72.6px;width:3px;height:1px;background:rgba(220,150,170,0.9)"></div><span class="lbl" style="left:28.5px;top:70.7px;font-size:9.5px">0.8</span><div class="a" style="left:9px;top:93.4px;width:3px;height:1px;background:rgba(220,150,170,0.9)"></div><span class="lbl" style="left:28.5px;top:91.5px;font-size:9.5px">0.7</span><div class="a" style="left:9px;top:114.2px;width:3px;height:1px;background:rgba(220,150,170,0.9)"></div><span class="lbl" style="left:28.5px;top:112.3px;font-size:9.5px">0.6</span><div class="a" style="left:9px;top:135.0px;width:3px;height:1px;background:rgba(220,150,170,0.9)"></div><span class="lbl" style="left:28.5px;top:133.1px;font-size:9.5px">0.5</span><div class="a" style="left:9px;top:155.8px;width:3px;height:1px;background:rgba(220,150,170,0.9)"></div><span class="lbl" style="left:28.5px;top:153.9px;font-size:9.5px">0.4</span><div class="a" style="left:9px;top:176.6px;width:3px;height:1px;background:rgba(220,150,170,0.9)"></div><span class="lbl" style="left:28.5px;top:174.7px;font-size:9.5px">0.3</span><div class="a" style="left:9px;top:197.4px;width:3px;height:1px;background:rgba(220,150,170,0.9)"></div><span class="lbl" style="left:28.5px;top:195.5px;font-size:9.5px">0.2</span><div class="a" style="left:9px;top:218.2px;width:3px;height:1px;background:rgba(220,150,170,0.9)"></div><span class="lbl" style="left:28.5px;top:216.3px;font-size:9.5px">0.1</span><span class="lbl" style="left:28.5px;top:237.1px;font-size:9.5px">0</span><span class="lbl" style="left:28.6px;top:255.9px;font-size:9.0px">Danger Level (von Mises)</span><span class="lbl" style="left:28.6px;top:264.2px;font-size:9.0px">Deflection scale: 46.297</span>
<div class="a" style="left:28px;top:287px;width:1px;height:22px;background:#757980"></div><div class="a" style="left:28px;top:309px;width:22px;height:1px;background:#757980"></div><span class="lbl" style="left:30.3px;top:280.8px;color:#50545a;font-size:10px">y</span><span class="lbl" style="left:53.0px;top:303.8px;color:#50545a;font-size:10px">x</span>
<div class="vtab" style="width:32px"><span>Top</span><div class="a" style="left:23px;top:2px;width:1px;height:9px;background:#444"></div><svg width="6" height="4" style="left:25px;top:5px"><path d="M0 0H5L2.5 3Z" fill="#333"/></svg></div>
<div class="a" style="left:513px;top:167.6px;width:201px;height:1.5px;background:#a84444"></div>
<div class="a" style="left:357px;top:0;width:1px;height:14px;background:#4caf4c"></div>
</div>
<div class="a" style="left:0;top:406px;width:714px;height:2px;background:#e2e6ee"></div>
<div class="vp" style="top:408px">
<svg class="g" width="714" height="336" style="left:0;top:0;background:#a3a7af"><path d="M9.50 0V336M17.60 0V336M25.70 0V336M41.90 0V336M50.00 0V336M58.10 0V336M74.30 0V336M82.40 0V336M90.50 0V336M106.70 0V336M114.80 0V336M122.90 0V336M139.10 0V336M147.20 0V336M155.30 0V336M171.50 0V336M179.60 0V336M187.70 0V336M203.90 0V336M212.00 0V336M220.10 0V336M236.30 0V336M244.40 0V336M252.50 0V336M268.70 0V336M276.80 0V336M284.90 0V336M301.10 0V336M309.20 0V336M317.30 0V336M333.50 0V336M341.60 0V336M349.70 0V336M365.90 0V336M374.00 0V336M382.10 0V336M398.30 0V336M406.40 0V336M414.50 0V336M430.70 0V336M438.80 0V336M446.90 0V336M463.10 0V336M471.20 0V336M479.30 0V336M495.50 0V336M503.60 0V336M511.70 0V336M527.90 0V336M536.00 0V336M544.10 0V336M560.30 0V336M568.40 0V336M576.50 0V336M592.70 0V336M600.80 0V336M608.90 0V336M625.10 0V336M633.20 0V336M641.30 0V336M657.50 0V336M665.60 0V336M673.70 0V336M689.90 0V336M698.00 0V336M706.10 0V336M0 14.30H714M0 22.40H714M0 30.50H714M0 46.70H714M0 54.80H714M0 62.90H714M0 79.10H714M0 87.20H714M0 95.30H714M0 111.50H714M0 119.60H714M0 127.70H714M0 143.90H714M0 152.00H714M0 160.10H714M0 176.30H714M0 184.40H714M0 192.50H714M0 208.70H714M0 216.80H714M0 224.90H714M0 241.10H714M0 249.20H714M0 257.30H714M0 273.50H714M0 281.60H714M0 289.70H714M0 305.90H714M0 314.00H714M0 322.10H714" stroke="#979ba3" stroke-width="1" fill="none"/><path d="M1.40 0V336M33.80 0V336M66.20 0V336M98.60 0V336M131.00 0V336M163.40 0V336M195.80 0V336M228.20 0V336M260.60 0V336M293.00 0V336M325.40 0V336M357.80 0V336M390.20 0V336M422.60 0V336M455.00 0V336M487.40 0V336M519.80 0V336M552.20 0V336M584.60 0V336M617.00 0V336M649.40 0V336M681.80 0V336M714.20 0V336M0 6.20H714M0 38.60H714M0 71.00H714M0 103.40H714M0 135.80H714M0 168.20H714M0 200.60H714M0 233.00H714M0 265.40H714M0 297.80H714M0 330.20H714" stroke="#878c94" stroke-width="1.15" fill="none"/></svg>
<div class="a" style="left:0;top:0;width:1px;height:336px;background:#dfe3eb"></div>
<svg width="659" height="144" style="left:28px;top:99px"><rect x="0" y="0" width="659" height="4" fill="#a4a6aa"/><rect x="0" y="0" width="5" height="144" fill="#a4a6aa"/><rect x="655" y="0" width="4" height="139" fill="#a4a6aa"/><path d="M6.10 0V4M11.17 0V4M16.24 0V4M21.31 0V4M26.38 0V4M31.45 0V4M36.52 0V4M41.59 0V4M46.66 0V4M51.73 0V4M56.80 0V4M61.87 0V4M66.94 0V4M72.01 0V4M77.08 0V4M82.15 0V4M87.22 0V4M92.29 0V4M97.36 0V4M102.43 0V4M107.50 0V4M112.57 0V4M117.64 0V4M122.71 0V4M127.78 0V4M132.85 0V4M137.92 0V4M142.99 0V4M148.06 0V4M153.13 0V4M158.20 0V4M163.27 0V4M168.34 0V4M173.41 0V4M178.48 0V4M183.55 0V4M188.62 0V4M193.69 0V4M198.76 0V4M203.83 0V4M208.90 0V4M213.97 0V4M219.04 0V4M224.11 0V4M229.18 0V4M234.25 0V4M239.32 0V4M244.39 0V4M249.46 0V4M254.53 0V4M259.60 0V4M264.67 0V4M269.74 0V4M274.81 0V4M279.88 0V4M284.95 0V4M290.02 0V4M295.09 0V4M300.16 0V4M305.23 0V4M310.30 0V4M315.37 0V4M320.44 0V4M325.51 0V4M330.58 0V4M335.65 0V4M340.72 0V4M345.79 0V4M350.86 0V4M355.93 0V4M361.00 0V4M366.07 0V4M371.14 0V4M376.21 0V4M381.28 0V4M386.35 0V4M391.42 0V4M396.49 0V4M401.56 0V4M406.63 0V4M411.70 0V4M416.77 0V4M421.84 0V4M426.91 0V4M431.98 0V4M437.05 0V4M442.12 0V4M447.19 0V4M452.26 0V4M457.33 0V4M462.40 0V4M467.47 0V4M472.54 0V4M477.61 0V4M482.68 0V4M487.75 0V4M492.82 0V4M497.89 0V4M502.96 0V4M508.03 0V4M513.10 0V4M518.17 0V4M523.24 0V4M528.31 0V4M533.38 0V4M538.45 0V4M543.52 0V4M548.59 0V4M553.66 0V4M558.73 0V4M563.80 0V4M568.87 0V4M573.94 0V4M579.01 0V4M584.08 0V4M589.15 0V4M594.22 0V4M599.29 0V4M604.36 0V4M609.43 0V4M614.50 0V4M619.57 0V4M624.64 0V4M629.71 0V4M634.78 0V4M639.85 0V4M644.92 0V4M649.99 0V4M655.06 0V4M0 -0.30H5M0 4.77H5M0 9.84H5M0 14.91H5M0 19.98H5M0 25.05H5M0 30.12H5M0 35.19H5M0 40.26H5M0 45.33H5M0 50.40H5M0 55.47H5M0 60.54H5M0 65.61H5M0 70.68H5M0 75.75H5M0 80.82H5M0 85.89H5M0 90.96H5M0 96.03H5M0 101.10H5M0 106.17H5M0 111.24H5M0 116.31H5M0 121.38H5M0 126.45H5M0 131.52H5M0 136.59H5M0 141.66H5M655 -0.30H659M655 4.77H659M655 9.84H659M655 14.91H659M655 19.98H659M655 25.05H659M655 30.12H659M655 35.19H659M655 40.26H659M655 45.33H659M655 50.40H659M655 55.47H659M655 60.54H659M655 65.61H659M655 70.68H659M655 75.75H659M655 80.82H659M655 85.89H659M655 90.96H659M655 96.03H659M655 101.10H659M655 106.17H659M655 111.24H659M655 116.31H659M655 121.38H659M655 126.45H659M655 131.52H659M655 136.59H659M0.5 0V144M658.5 0V139M0 0.5H659" stroke="#111" stroke-width="1" fill="none" shape-rendering="crispEdges"/></svg>
<div class="a" style="left:34px;top:103px;width:648px;height:3px;background:linear-gradient(to right,#001eec 0.0%,#001eeb 5.0%,#001feb 10.0%,#001feb 15.0%,#0020eb 20.0%,#0021eb 25.0%,#0022eb 30.0%,#0023eb 35.0%,#0024eb 40.0%,#0024eb 45.0%,#0025eb 50.0%,#0024eb 55.0%,#0024eb 60.0%,#0023eb 65.0%,#0022eb 70.0%,#0021eb 75.0%,#0020eb 80.0%,#001feb 85.0%,#001feb 90.0%,#001eeb 95.0%,#001eec 100.0%)"></div><div class="a" style="left:34px;top:106px;width:648px;height:3px;background:linear-gradient(to right,#001eeb 0.0%,#001feb 5.0%,#001feb 10.0%,#0020eb 15.0%,#0021eb 20.0%,#0022eb 25.0%,#0023eb 30.0%,#0024eb 35.0%,#0025eb 40.0%,#0025eb 45.0%,#0025eb 50.0%,#0025eb 55.0%,#0025eb 60.0%,#0024eb 65.0%,#0023eb 70.0%,#0022eb 75.0%,#0021eb 80.0%,#0020eb 85.0%,#001feb 90.0%,#001feb 95.0%,#001eeb 100.0%)"></div><div class="a" style="left:34px;top:109px;width:648px;height:3px;background:linear-gradient(to right,#001feb 0.0%,#001feb 5.0%,#0020eb 10.0%,#0021eb 15.0%,#0022eb 20.0%,#0023eb 25.0%,#0024eb 30.0%,#0025eb 35.0%,#0025eb 40.0%,#0026eb 45.0%,#0026eb 50.0%,#0026eb 55.0%,#0025eb 60.0%,#0025eb 65.0%,#0024eb 70.0%,#0023eb 75.0%,#0022eb 80.0%,#0021eb 85.0%,#0020eb 90.0%,#001feb 95.0%,#001feb 100.0%)"></div><div class="a" style="left:34px;top:112px;width:648px;height:3px;background:linear-gradient(to right,#0020eb 0.0%,#0020eb 5.0%,#0021eb 10.0%,#0021eb 15.0%,#0022eb 20.0%,#0023eb 25.0%,#0024eb 30.0%,#0025eb 35.0%,#0026eb 40.0%,#0027eb 45.0%,#0027eb 50.0%,#0027eb 55.0%,#0026eb 60.0%,#0025eb 65.0%,#0024eb 70.0%,#0023eb 75.0%,#0022eb 80.0%,#0021eb 85.0%,#0021eb 90.0%,#0020eb 95.0%,#0020eb 100.0%)"></div><div class="a" style="left:34px;top:115px;width:648px;height:3px;background:linear-gradient(to right,#0020eb 0.0%,#0021eb 5.0%,#0021eb 10.0%,#0022eb 15.0%,#0023eb 20.0%,#0024eb 25.0%,#0025eb 30.0%,#0026eb 35.0%,#0027eb 40.0%,#0028eb 45.0%,#0028eb 50.0%,#0027eb 55.0%,#0027eb 60.0%,#0026eb 65.0%,#0025eb 70.0%,#0024eb 75.0%,#0023eb 80.0%,#0022eb 85.0%,#0021eb 90.0%,#0021eb 95.0%,#0020eb 100.0%)"></div><div class="a" style="left:34px;top:118px;width:648px;height:3px;background:linear-gradient(to right,#0021eb 0.0%,#0021eb 5.0%,#0022eb 10.0%,#0023eb 15.0%,#0024eb 20.0%,#0025eb 25.0%,#0026eb 30.0%,#0027eb 35.0%,#0028eb 40.0%,#0028eb 45.0%,#0028eb 50.0%,#0028eb 55.0%,#0028eb 60.0%,#0027eb 65.0%,#0026eb 70.0%,#0025eb 75.0%,#0024eb 80.0%,#0023eb 85.0%,#0022eb 90.0%,#0021eb 95.0%,#0021eb 100.0%)"></div><div class="a" style="left:34px;top:121px;width:648px;height:3px;background:linear-gradient(to right,#0022eb 0.0%,#0022eb 5.0%,#0023eb 10.0%,#0023eb 15.0%,#0024eb 20.0%,#0025eb 25.0%,#0027eb 30.0%,#0028eb 35.0%,#0028eb 40.0%,#0029eb 45.0%,#0029eb 50.0%,#0029eb 55.0%,#0028eb 60.0%,#0028eb 65.0%,#0027eb 70.0%,#0025eb 75.0%,#0024eb 80.0%,#0023eb 85.0%,#0023eb 90.0%,#0022eb 95.0%,#0022eb 100.0%)"></div><div class="a" style="left:34px;top:124px;width:648px;height:3px;background:linear-gradient(to right,#0022eb 0.0%,#0023eb 5.0%,#0023eb 10.0%,#0024eb 15.0%,#0025eb 20.0%,#0026eb 25.0%,#0027eb 30.0%,#0028eb 35.0%,#0029eb 40.0%,#002aeb 45.0%,#002aeb 50.0%,#002aeb 55.0%,#0029eb 60.0%,#0028eb 65.0%,#0027eb 70.0%,#0026eb 75.0%,#0025eb 80.0%,#0024eb 85.0%,#0023eb 90.0%,#0023eb 95.0%,#0022eb 100.0%)"></div><div class="a" style="left:34px;top:127px;width:648px;height:3px;background:linear-gradient(to right,#0023eb 0.0%,#0024eb 5.0%,#0024eb 10.0%,#0025eb 15.0%,#0026eb 20.0%,#0027eb 25.0%,#0029eb 30.0%,#002aeb 35.0%,#002bea 40.0%,#002bea 45.0%,#002bea 50.0%,#002bea 55.0%,#002bea 60.0%,#002aeb 65.0%,#0028eb 70.0%,#0027eb 75.0%,#0026eb 80.0%,#0025eb 85.0%,#0024eb 90.0%,#0024eb 95.0%,#0023eb 100.0%)"></div><div class="a" style="left:34px;top:130px;width:648px;height:3px;background:linear-gradient(to right,#0025eb 0.0%,#0025eb 5.0%,#0026eb 10.0%,#0027eb 15.0%,#0028eb 20.0%,#0029eb 25.0%,#002aeb 30.0%,#002bea 35.0%,#002cea 40.0%,#002dea 45.0%,#002dea 50.0%,#002dea 55.0%,#002cea 60.0%,#002bea 65.0%,#002aeb 70.0%,#0029eb 75.0%,#0028eb 80.0%,#0027eb 85.0%,#0026eb 90.0%,#0025eb 95.0%,#0025eb 100.0%)"></div><div class="a" style="left:34px;top:133px;width:648px;height:3px;background:linear-gradient(to right,#0026eb 0.0%,#0027eb 5.0%,#0028eb 10.0%,#0028eb 15.0%,#002aeb 20.0%,#002bea 25.0%,#002cea 30.0%,#002dea 35.0%,#002eea 40.0%,#002fea 45.0%,#002fea 50.0%,#002fea 55.0%,#002eea 60.0%,#002dea 65.0%,#002cea 70.0%,#002bea 75.0%,#0029eb 80.0%,#0028eb 85.0%,#0028eb 90.0%,#0027eb 95.0%,#0026eb 100.0%)"></div><div class="a" style="left:34px;top:136px;width:648px;height:3px;background:linear-gradient(to right,#0028eb 0.0%,#0028eb 5.0%,#0029eb 10.0%,#002aeb 15.0%,#002bea 20.0%,#002cea 25.0%,#002eea 30.0%,#002fea 35.0%,#0030ea 40.0%,#0030ea 45.0%,#0030ea 50.0%,#0030ea 55.0%,#0030ea 60.0%,#002fea 65.0%,#002eea 70.0%,#002cea 75.0%,#002bea 80.0%,#002aeb 85.0%,#0029eb 90.0%,#0028eb 95.0%,#0028eb 100.0%)"></div><div class="a" style="left:34px;top:139px;width:648px;height:3px;background:linear-gradient(to right,#0029eb 0.0%,#002aeb 5.0%,#002bea 10.0%,#002cea 15.0%,#002dea 20.0%,#002eea 25.0%,#0030ea 30.0%,#0030ea 35.0%,#0031ea 40.0%,#0032ea 45.0%,#0032ea 50.0%,#0032ea 55.0%,#0031ea 60.0%,#0030ea 65.0%,#002fea 70.0%,#002eea 75.0%,#002dea 80.0%,#002cea 85.0%,#002bea 90.0%,#002aeb 95.0%,#0029eb 100.0%)"></div><div class="a" style="left:34px;top:142px;width:648px;height:3px;background:linear-gradient(to right,#002bea 0.0%,#002bea 5.0%,#002cea 10.0%,#002dea 15.0%,#002eea 20.0%,#0030ea 25.0%,#0030ea 30.0%,#0032ea 35.0%,#0033ea 40.0%,#0033ea 45.0%,#0034ea 50.0%,#0033ea 55.0%,#0033ea 60.0%,#0032ea 65.0%,#0030ea 70.0%,#0030ea 75.0%,#002eea 80.0%,#002dea 85.0%,#002cea 90.0%,#002bea 95.0%,#002bea 100.0%)"></div><div class="a" style="left:34px;top:145px;width:648px;height:3px;background:linear-gradient(to right,#002cea 0.0%,#002dea 5.0%,#002eea 10.0%,#002fea 15.0%,#0030ea 20.0%,#0031ea 25.0%,#0032ea 30.0%,#0033ea 35.0%,#0035ea 40.0%,#0035ea 45.0%,#0035ea 50.0%,#0035ea 55.0%,#0034ea 60.0%,#0033ea 65.0%,#0032ea 70.0%,#0030ea 75.0%,#0030ea 80.0%,#002fea 85.0%,#002eea 90.0%,#002dea 95.0%,#002cea 100.0%)"></div><div class="a" style="left:34px;top:148px;width:648px;height:3px;background:linear-gradient(to right,#002eea 0.0%,#002fea 5.0%,#002fea 10.0%,#0030ea 15.0%,#0031ea 20.0%,#0032ea 25.0%,#0034ea 30.0%,#0035ea 35.0%,#0036e9 40.0%,#0037e9 45.0%,#0037e9 50.0%,#0037e9 55.0%,#0036e9 60.0%,#0035ea 65.0%,#0034ea 70.0%,#0032ea 75.0%,#0031ea 80.0%,#0030ea 85.0%,#002fea 90.0%,#002fea 95.0%,#002eea 100.0%)"></div><div class="a" style="left:34px;top:151px;width:648px;height:3px;background:linear-gradient(to right,#0030ea 0.0%,#0030ea 5.0%,#0031ea 10.0%,#0032ea 15.0%,#0033ea 20.0%,#0035ea 25.0%,#0036e9 30.0%,#0038e9 35.0%,#0039e9 40.0%,#003ae9 45.0%,#003ae9 50.0%,#003ae9 55.0%,#0039e9 60.0%,#0038e9 65.0%,#0036e9 70.0%,#0034ea 75.0%,#0033ea 80.0%,#0032ea 85.0%,#0031ea 90.0%,#0030ea 95.0%,#0030ea 100.0%)"></div><div class="a" style="left:34px;top:154px;width:648px;height:3px;background:linear-gradient(to right,#0034ea 0.0%,#0035ea 5.0%,#0036ea 10.0%,#0037e9 15.0%,#0038e9 20.0%,#003ae9 25.0%,#003ce9 30.0%,#003de9 35.0%,#003fe9 40.0%,#0040e9 45.0%,#0040e9 50.0%,#0040e9 55.0%,#003fe9 60.0%,#003de9 65.0%,#003ce9 70.0%,#003ae9 75.0%,#0038e9 80.0%,#0037e9 85.0%,#0036ea 90.0%,#0035ea 95.0%,#0034ea 100.0%)"></div><div class="a" style="left:34px;top:157px;width:648px;height:3px;background:linear-gradient(to right,#0039e9 0.0%,#003ae9 5.0%,#003be9 10.0%,#003ce9 15.0%,#003ee9 20.0%,#0040e9 25.0%,#0042e9 30.0%,#0043e9 35.0%,#0045e9 40.0%,#0046e9 45.0%,#0046e9 50.0%,#0046e9 55.0%,#0045e9 60.0%,#0043e9 65.0%,#0041e9 70.0%,#0040e9 75.0%,#003ee9 80.0%,#003ce9 85.0%,#003be9 90.0%,#003ae9 95.0%,#0039e9 100.0%)"></div><div class="a" style="left:34px;top:160px;width:648px;height:3px;background:linear-gradient(to right,#003ee9 0.0%,#003fe9 5.0%,#0040e9 10.0%,#0041e9 15.0%,#0043e9 20.0%,#0045e9 25.0%,#0047e9 30.0%,#0049e9 35.0%,#004be9 40.0%,#004ce9 45.0%,#004ce9 50.0%,#004ce9 55.0%,#004be9 60.0%,#0049e9 65.0%,#0047e9 70.0%,#0045e9 75.0%,#0043e9 80.0%,#0041e9 85.0%,#0040e9 90.0%,#003fe9 95.0%,#003ee9 100.0%)"></div><div class="a" style="left:34px;top:163px;width:648px;height:3px;background:linear-gradient(to right,#0043e9 0.0%,#0044e9 5.0%,#0045e9 10.0%,#0047e9 15.0%,#0049e9 20.0%,#004be9 25.0%,#004de9 30.0%,#004fe9 35.0%,#0051e9 40.0%,#0051e9 45.0%,#0051e9 50.0%,#0051e9 55.0%,#0051e9 60.0%,#004fe9 65.0%,#004de9 70.0%,#004be9 75.0%,#0049e9 80.0%,#0047e9 85.0%,#0045e9 90.0%,#0044e9 95.0%,#0043e9 100.0%)"></div><div class="a" style="left:34px;top:166px;width:648px;height:3px;background:linear-gradient(to right,#0048e9 0.0%,#0049e9 5.0%,#004ae9 10.0%,#004ce9 15.0%,#004ee9 20.0%,#0050e9 25.0%,#0052e9 30.0%,#0054e9 35.0%,#0056e9 40.0%,#0057e9 45.0%,#0058e9 50.0%,#0057e9 55.0%,#0056e9 60.0%,#0054e9 65.0%,#0052e9 70.0%,#0050e9 75.0%,#004ee9 80.0%,#004ce9 85.0%,#004ae9 90.0%,#0049e9 95.0%,#0048e9 100.0%)"></div><div class="a" style="left:34px;top:169px;width:648px;height:3px;background:linear-gradient(to right,#004de9 0.0%,#004ee9 5.0%,#004fe9 10.0%,#0051e9 15.0%,#0053e9 20.0%,#0055e9 25.0%,#0058e9 30.0%,#005ae9 35.0%,#005ce9 40.0%,#005de9 45.0%,#005ee9 50.0%,#005de9 55.0%,#005ce9 60.0%,#005ae9 65.0%,#0057e9 70.0%,#0055e9 75.0%,#0052e9 80.0%,#0051e9 85.0%,#004fe9 90.0%,#004ee9 95.0%,#004de9 100.0%)"></div><div class="a" style="left:34px;top:172px;width:648px;height:3px;background:linear-gradient(to right,#0051e9 0.0%,#0052e9 5.0%,#0053e9 10.0%,#0055e9 15.0%,#0058e9 20.0%,#005ae9 25.0%,#005de9 30.0%,#005fe9 35.0%,#0062e9 40.0%,#0063e9 45.0%,#0063e9 50.0%,#0063e9 55.0%,#0061e9 60.0%,#005fe9 65.0%,#005de9 70.0%,#005ae9 75.0%,#0057e9 80.0%,#0055e9 85.0%,#0053e9 90.0%,#0052e9 95.0%,#0051e9 100.0%)"></div><div class="a" style="left:34px;top:175px;width:648px;height:3px;background:linear-gradient(to right,#0055e9 0.0%,#0056e9 5.0%,#0058e9 10.0%,#005ae9 15.0%,#005ce9 20.0%,#005fe9 25.0%,#0062e9 30.0%,#0064e9 35.0%,#0067e9 40.0%,#0068e9 45.0%,#0069e9 50.0%,#0068e9 55.0%,#0067e9 60.0%,#0064e9 65.0%,#0062e9 70.0%,#005fe9 75.0%,#005ce9 80.0%,#005ae9 85.0%,#0058e9 90.0%,#0056e9 95.0%,#0055e9 100.0%)"></div><div class="a" style="left:34px;top:178px;width:648px;height:3px;background:linear-gradient(to right,#0059e9 0.0%,#005ae9 5.0%,#005ce9 10.0%,#005ee9 15.0%,#0061e9 20.0%,#0064e9 25.0%,#0067e9 30.0%,#0069e9 35.0%,#006ce9 40.0%,#006de9 45.0%,#006ee9 50.0%,#006de9 55.0%,#006ce9 60.0%,#0069e9 65.0%,#0066e9 70.0%,#0063e9 75.0%,#0061e9 80.0%,#005ee9 85.0%,#005ce9 90.0%,#005ae9 95.0%,#0059e9 100.0%)"></div><div class="a" style="left:34px;top:181px;width:648px;height:3px;background:linear-gradient(to right,#005de9 0.0%,#005fe9 5.0%,#0060e9 10.0%,#0063e9 15.0%,#0065e9 20.0%,#0068e9 25.0%,#006ce9 30.0%,#006ee9 35.0%,#0071e9 40.0%,#0071e9 45.0%,#0072e9 50.0%,#0071e9 55.0%,#0071e9 60.0%,#006ee9 65.0%,#006be9 70.0%,#0068e9 75.0%,#0065e9 80.0%,#0063e9 85.0%,#0060e9 90.0%,#005fe9 95.0%,#005de9 100.0%)"></div><div class="a" style="left:34px;top:184px;width:648px;height:3px;background:linear-gradient(to right,#0062e9 0.0%,#0063e9 5.0%,#0065e9 10.0%,#0067e9 15.0%,#006ae9 20.0%,#006de9 25.0%,#0070e9 30.0%,#0072e9 35.0%,#0075e9 40.0%,#0077e9 45.0%,#0077e9 50.0%,#0077e9 55.0%,#0075e9 60.0%,#0072e9 65.0%,#0070e9 70.0%,#006de9 75.0%,#006ae9 80.0%,#0067e9 85.0%,#0065e9 90.0%,#0063e9 95.0%,#0062e9 100.0%)"></div><div class="a" style="left:34px;top:187px;width:648px;height:3px;background:linear-gradient(to right,#0066e9 0.0%,#0067e9 5.0%,#0069e9 10.0%,#006ce9 15.0%,#006fe9 20.0%,#0071e9 25.0%,#0074e9 30.0%,#0077e9 35.0%,#007ae9 40.0%,#007ce8 45.0%,#007ce8 50.0%,#007be8 55.0%,#007ae9 60.0%,#0077e9 65.0%,#0074e9 70.0%,#0071e9 75.0%,#006ee9 80.0%,#006be9 85.0%,#0069e9 90.0%,#0067e9 95.0%,#0066e9 100.0%)"></div><div class="a" style="left:34px;top:190px;width:648px;height:3px;background:linear-gradient(to right,#006ae9 0.0%,#006ce9 5.0%,#006ee9 10.0%,#0070e9 15.0%,#0072e9 20.0%,#0076e9 25.0%,#0079e9 30.0%,#007ce8 35.0%,#007fe7 40.0%,#0080e6 45.0%,#0081e6 50.0%,#0080e6 55.0%,#007ee7 60.0%,#007ce8 65.0%,#0079e9 70.0%,#0075e9 75.0%,#0072e9 80.0%,#0070e9 85.0%,#006de9 90.0%,#006ce9 95.0%,#006ae9 100.0%)"></div><div class="a" style="left:34px;top:193px;width:648px;height:3px;background:linear-gradient(to right,#006de9 0.0%,#006fe9 5.0%,#0071e9 10.0%,#0073e9 15.0%,#0076e9 20.0%,#0079e9 25.0%,#007de7 30.0%,#0080e6 35.0%,#0082e5 40.0%,#0084e4 45.0%,#0084e4 50.0%,#0084e4 55.0%,#0082e5 60.0%,#007fe6 65.0%,#007ce8 70.0%,#0079e9 75.0%,#0076e9 80.0%,#0072e9 85.0%,#0071e9 90.0%,#006fe9 95.0%,#006de9 100.0%)"></div><div class="a" style="left:34px;top:196px;width:648px;height:3px;background:linear-gradient(to right,#0071e9 0.0%,#0071e9 5.0%,#0073e9 10.0%,#0076e9 15.0%,#0079e9 20.0%,#007ce8 25.0%,#0080e6 30.0%,#0083e5 35.0%,#0086e3 40.0%,#0087e3 45.0%,#0088e3 50.0%,#0087e3 55.0%,#0085e4 60.0%,#0083e5 65.0%,#0080e6 70.0%,#007ce8 75.0%,#0079e9 80.0%,#0076e9 85.0%,#0073e9 90.0%,#0071e9 95.0%,#0070e9 100.0%)"></div><div class="a" style="left:34px;top:199px;width:648px;height:3px;background:linear-gradient(to right,#0073e9 0.0%,#0074e9 5.0%,#0076e9 10.0%,#0079e9 15.0%,#007ce8 20.0%,#007fe6 25.0%,#0083e5 30.0%,#0086e3 35.0%,#0089e2 40.0%,#008be1 45.0%,#008be1 50.0%,#008be1 55.0%,#0089e2 60.0%,#0086e3 65.0%,#0083e5 70.0%,#007fe6 75.0%,#007ce8 80.0%,#0079e9 85.0%,#0076e9 90.0%,#0074e9 95.0%,#0073e9 100.0%)"></div><div class="a" style="left:34px;top:202px;width:648px;height:3px;background:linear-gradient(to right,#0076e9 0.0%,#0077e9 5.0%,#007ae9 10.0%,#007ce8 15.0%,#007fe6 20.0%,#0083e5 25.0%,#0086e3 30.0%,#008ae2 35.0%,#008ce1 40.0%,#008ee0 45.0%,#008fe0 50.0%,#008ee0 55.0%,#008ce1 60.0%,#0089e2 65.0%,#0086e3 70.0%,#0082e5 75.0%,#007fe6 80.0%,#007ce8 85.0%,#0079e9 90.0%,#0077e9 95.0%,#0076e9 100.0%)"></div><div class="a" style="left:34px;top:205px;width:648px;height:3px;background:linear-gradient(to right,#0079e9 0.0%,#007ae8 5.0%,#007ce8 10.0%,#007fe6 15.0%,#0082e5 20.0%,#0086e3 25.0%,#0089e2 30.0%,#008de0 35.0%,#0090df 40.0%,#0091de 45.0%,#0092de 50.0%,#0091de 55.0%,#008fdf 60.0%,#008de0 65.0%,#0089e2 70.0%,#0085e4 75.0%,#0082e5 80.0%,#007fe6 85.0%,#007ce8 90.0%,#007ae8 95.0%,#0079e9 100.0%)"></div><div class="a" style="left:34px;top:208px;width:648px;height:3px;background:linear-gradient(to right,#0078e9 0.0%,#007ae9 5.0%,#007ce8 10.0%,#007fe7 15.0%,#0082e5 20.0%,#0085e4 25.0%,#0089e2 30.0%,#008ce1 35.0%,#008fdf 40.0%,#0091de 45.0%,#0092de 50.0%,#0091df 55.0%,#008fdf 60.0%,#008ce1 65.0%,#0089e2 70.0%,#0085e4 75.0%,#0082e5 80.0%,#007ee7 85.0%,#007ce8 90.0%,#007ae9 95.0%,#0078e9 100.0%)"></div><div class="a" style="left:34px;top:211px;width:648px;height:3px;background:linear-gradient(to right,#0077e9 0.0%,#0079e9 5.0%,#007be8 10.0%,#007de7 15.0%,#0081e6 20.0%,#0084e4 25.0%,#0088e3 30.0%,#008be1 35.0%,#008ee0 40.0%,#0090df 45.0%,#0090df 50.0%,#0090df 55.0%,#008ee0 60.0%,#008be1 65.0%,#0087e3 70.0%,#0084e4 75.0%,#0080e6 80.0%,#007de7 85.0%,#007be8 90.0%,#0079e9 95.0%,#0077e9 100.0%)"></div><div class="a" style="left:34px;top:214px;width:648px;height:3px;background:linear-gradient(to right,#0076e9 0.0%,#0078e9 5.0%,#007ae9 10.0%,#007ce8 15.0%,#007fe6 20.0%,#0083e5 25.0%,#0086e3 30.0%,#008ae2 35.0%,#008de0 40.0%,#008ee0 45.0%,#008fdf 50.0%,#008ee0 55.0%,#008ce0 60.0%,#008ae2 65.0%,#0086e3 70.0%,#0083e5 75.0%,#007fe6 80.0%,#007ce8 85.0%,#007ae9 90.0%,#0077e9 95.0%,#0076e9 100.0%)"></div><div class="a" style="left:34px;top:217px;width:648px;height:3px;background:linear-gradient(to right,#0075e9 0.0%,#0076e9 5.0%,#0079e9 10.0%,#007be8 15.0%,#007ee7 20.0%,#0082e5 25.0%,#0085e4 30.0%,#0089e2 35.0%,#008be1 40.0%,#008de0 45.0%,#008ee0 50.0%,#008de0 55.0%,#008be1 60.0%,#0088e2 65.0%,#0085e4 70.0%,#0081e5 75.0%,#007ee7 80.0%,#007be8 85.0%,#0078e9 90.0%,#0076e9 95.0%,#0075e9 100.0%)"></div><div class="a" style="left:34px;top:220px;width:648px;height:3px;background:linear-gradient(to right,#0071e9 0.0%,#0071e9 5.0%,#0073e9 10.0%,#0076e9 15.0%,#0079e9 20.0%,#007ce7 25.0%,#0080e6 30.0%,#0083e5 35.0%,#0086e3 40.0%,#0087e3 45.0%,#0088e2 50.0%,#0087e3 55.0%,#0086e3 60.0%,#0083e5 65.0%,#0080e6 70.0%,#007ce8 75.0%,#0079e9 80.0%,#0076e9 85.0%,#0073e9 90.0%,#0071e9 95.0%,#0071e9 100.0%)"></div><div class="a" style="left:34px;top:223px;width:648px;height:3px;background:linear-gradient(to right,#0068e9 0.0%,#0069e9 5.0%,#006be9 10.0%,#006de9 15.0%,#0070e9 20.0%,#0073e9 25.0%,#0076e9 30.0%,#0079e9 35.0%,#007ce8 40.0%,#007de7 45.0%,#007ee7 50.0%,#007de7 55.0%,#007ce8 60.0%,#0079e9 65.0%,#0076e9 70.0%,#0073e9 75.0%,#0070e9 80.0%,#006de9 85.0%,#006be9 90.0%,#0069e9 95.0%,#0068e9 100.0%)"></div><div class="a" style="left:34px;top:226px;width:648px;height:3px;background:linear-gradient(to right,#0055e9 0.0%,#0056e9 5.0%,#0058e9 10.0%,#005ae9 15.0%,#005ce9 20.0%,#005fe9 25.0%,#0062e9 30.0%,#0065e9 35.0%,#0067e9 40.0%,#0068e9 45.0%,#0069e9 50.0%,#0068e9 55.0%,#0067e9 60.0%,#0064e9 65.0%,#0062e9 70.0%,#005fe9 75.0%,#005ce9 80.0%,#005ae9 85.0%,#0058e9 90.0%,#0056e9 95.0%,#0055e9 100.0%)"></div><div class="a" style="left:34px;top:229px;width:648px;height:3px;background:linear-gradient(to right,#003ae9 0.0%,#003ae9 5.0%,#003be9 10.0%,#003de9 15.0%,#003fe9 20.0%,#0040e9 25.0%,#0042e9 30.0%,#0044e9 35.0%,#0046e9 40.0%,#0047e9 45.0%,#0047e9 50.0%,#0047e9 55.0%,#0046e9 60.0%,#0044e9 65.0%,#0042e9 70.0%,#0040e9 75.0%,#003ee9 80.0%,#003de9 85.0%,#003be9 90.0%,#003ae9 95.0%,#003ae9 100.0%)"></div>
<svg width="648" height="129" style="left:34px;top:103px"><path d="M1.60 0V129M6.75 0V129M11.90 0V129M17.05 0V129M22.20 0V129M27.35 0V129M32.50 0V129M37.65 0V129M42.80 0V129M47.95 0V129M53.10 0V129M58.25 0V129M63.40 0V129M68.55 0V129M73.70 0V129M78.85 0V129M84.00 0V129M89.15 0V129M94.30 0V129M99.45 0V129M104.60 0V129M109.75 0V129M114.90 0V129M120.05 0V129M125.20 0V129M130.35 0V129M135.50 0V129M140.65 0V129M145.80 0V129M150.95 0V129M156.10 0V129M161.25 0V129M166.40 0V129M171.55 0V129M176.70 0V129M181.85 0V129M187.00 0V129M192.15 0V129M197.30 0V129M202.45 0V129M207.60 0V129M212.75 0V129M217.90 0V129M223.05 0V129M228.20 0V129M233.35 0V129M238.50 0V129M243.65 0V129M248.80 0V129M253.95 0V129M259.10 0V129M264.25 0V129M269.40 0V129M274.55 0V129M279.70 0V129M284.85 0V129M290.00 0V129M295.15 0V129M300.30 0V129M305.45 0V129M310.60 0V129M315.75 0V129M320.90 0V129M326.05 0V129M331.20 0V129M336.35 0V129M341.50 0V129M346.65 0V129M351.80 0V129M356.95 0V129M362.10 0V129M367.25 0V129M372.40 0V129M377.55 0V129M382.70 0V129M387.85 0V129M393.00 0V129M398.15 0V129M403.30 0V129M408.45 0V129M413.60 0V129M418.75 0V129M423.90 0V129M429.05 0V129M434.20 0V129M439.35 0V129M444.50 0V129M449.65 0V129M454.80 0V129M459.95 0V129M465.10 0V129M470.25 0V129M475.40 0V129M480.55 0V129M485.70 0V129M490.85 0V129M496.00 0V129M501.15 0V129M506.30 0V129M511.45 0V129M516.60 0V129M521.75 0V129M526.90 0V129M532.05 0V129M537.20 0V129M542.35 0V129M547.50 0V129M552.65 0V129M557.80 0V129M562.95 0V129M568.10 0V129M573.25 0V129M578.40 0V129M583.55 0V129M588.70 0V129M593.85 0V129M599.00 0V129M604.15 0V129M609.30 0V129M614.45 0V129M619.60 0V129M624.75 0V129M629.90 0V129M635.05 0V129M640.20 0V129M645.35 0V129M0 0.2H648M0 2.00H648M0 7.26H648M0 12.52H648M0 17.78H648M0 23.04H648M0 28.30H648M0 33.56H648M0 38.82H648M0 44.08H648M0 49.34H648M0 54.60H648M0 59.86H648M0 65.12H648M0 70.38H648M0 75.64H648M0 80.90H648M0 86.16H648M0 91.42H648M0 96.68H648M0 101.94H648M0 107.20H648M0 112.46H648M0 117.72H648M0 122.98H648" stroke="rgba(0,0,10,0.62)" stroke-width="1.1" fill="none"/><path d="M0 0.30H648M0 23.50H648M0 49.60H648M0 75.60H648M0 107.10H648M144.70 0V129M155.20 0V129M160.80 0V129M170.60 0V129M176.20 0V129M305.50 0V129M311.00 0V129M316.00 0V129M323.80 0V129M326.50 0V129M332.00 0V129M337.00 0V129M470.00 0V129M481.00 0V129M486.00 0V129M496.00 0V129M502.00 0V129" stroke="rgba(0,0,0,0.55)" stroke-width="1" fill="none" shape-rendering="crispEdges"/></svg>
<svg width="714" height="336" style="left:0;top:0"><path d="M31.0 232.0 L684.0 232.0 L684.0 248.0 L678.0 248.0 L672.0 248.0 L666.0 248.1 L660.0 248.1 L654.0 248.2 L648.0 248.3 L642.0 248.5 L636.0 248.6 L630.0 248.8 L624.0 249.0 L618.0 249.3 L612.0 249.5 L606.0 249.8 L600.0 250.2 L594.0 250.5 L588.0 250.9 L582.0 251.2 L576.0 251.6 L570.0 252.0 L564.0 252.5 L558.0 252.9 L552.0 253.3 L546.0 253.8 L540.0 254.3 L534.0 254.7 L528.0 255.2 L522.0 255.7 L516.0 256.2 L510.0 256.6 L504.0 257.1 L498.0 257.6 L492.0 258.1 L486.0 258.5 L480.0 258.9 L474.0 259.4 L468.0 259.8 L462.0 260.2 L456.0 260.6 L450.0 261.0 L444.0 261.3 L438.0 261.7 L432.0 262.0 L426.0 262.3 L420.0 262.6 L414.0 262.8 L408.0 263.1 L402.0 263.3 L396.0 263.4 L390.0 263.6 L384.0 263.7 L378.0 263.8 L372.0 263.9 L366.0 264.0 L360.0 264.0 L354.0 264.0 L348.0 264.0 L342.0 263.9 L336.0 263.8 L330.0 263.7 L324.0 263.6 L318.0 263.4 L312.0 263.2 L306.0 263.0 L300.0 262.8 L294.0 262.5 L288.0 262.2 L282.0 261.9 L276.0 261.6 L270.0 261.3 L264.0 260.9 L258.0 260.5 L252.0 260.1 L246.0 259.7 L240.0 259.3 L234.0 258.9 L228.0 258.4 L222.0 258.0 L216.0 257.5 L210.0 257.0 L204.0 256.6 L198.0 256.1 L192.0 255.6 L186.0 255.1 L180.0 254.7 L174.0 254.2 L168.0 253.7 L162.0 253.3 L156.0 252.8 L150.0 252.4 L144.0 252.0 L138.0 251.6 L132.0 251.2 L126.0 250.8 L120.0 250.4 L114.0 250.1 L108.0 249.8 L102.0 249.5 L96.0 249.2 L90.0 249.0 L84.0 248.8 L78.0 248.6 L72.0 248.4 L66.0 248.3 L60.0 248.2 L54.0 248.1 L48.0 248.1 L42.0 248.0 L36.0 248.0 L31.0 248.0 Z" fill="#000"/></svg>
<div class="a" style="left:9px;top:30.5px;width:18px;height:209.0px;background:linear-gradient(to bottom,#ff0000 0.0%,#ff1500 2.5%,#ff2b00 5.0%,#ff4000 7.5%,#ff5500 10.0%,#ff6c00 12.5%,#ff8200 15.0%,#ff9900 17.5%,#ffaf00 20.0%,#ffd700 22.5%,#ffff00 25.0%,#e4ff00 27.5%,#c8ff00 30.0%,#aaff00 32.5%,#8cff00 35.0%,#6eff00 37.5%,#50ff00 40.0%,#3cfc05 42.5%,#28fa0a 45.0%,#14f80f 47.5%,#00f514 50.0%,#00ea2d 52.5%,#00de46 55.0%,#00d35f 57.5%,#00c878 60.0%,#00c490 62.5%,#00bfa8 65.0%,#00babf 67.5%,#00b6d7 70.0%,#00a8dd 72.5%,#009ae4 75.0%,#008bea 77.5%,#007df0 80.0%,#006df0 82.5%,#005ef0 85.0%,#004ef0 87.5%,#003ef0 90.0%,#002ef1 92.5%,#001ff2 95.0%,#0010f4 97.5%,#0000f5 100.0%)"></div><span class="lbl" style="left:28.5px;top:28.1px;font-size:9.5px">1 and &gt;</span><div class="a" style="left:9px;top:50.9px;width:3px;height:1px;background:rgba(220,150,170,0.9)"></div><span class="lbl" style="left:28.5px;top:49.0px;font-size:9.5px">0.9</span><div class="a" style="left:9px;top:71.8px;width:3px;height:1px;background:rgba(220,150,170,0.9)"></div><span class="lbl" style="left:28.5px;top:69.9px;font-size:9.5px">0.8</span><div class="a" style="left:9px;top:92.7px;width:3px;height:1px;background:rgba(220,150,170,0.9)"></div><span class="lbl" style="left:28.5px;top:90.8px;font-size:9.5px">0.7</span><div class="a" style="left:9px;top:113.6px;width:3px;height:1px;background:rgba(220,150,170,0.9)"></div><span class="lbl" style="left:28.5px;top:111.7px;font-size:9.5px">0.6</span><div class="a" style="left:9px;top:134.5px;width:3px;height:1px;background:rgba(220,150,170,0.9)"></div><span class="lbl" style="left:28.5px;top:132.6px;font-size:9.5px">0.5</span><div class="a" style="left:9px;top:155.4px;width:3px;height:1px;background:rgba(220,150,170,0.9)"></div><span class="lbl" style="left:28.5px;top:153.5px;font-size:9.5px">0.4</span><div class="a" style="left:9px;top:176.3px;width:3px;height:1px;background:rgba(220,150,170,0.9)"></div><span class="lbl" style="left:28.5px;top:174.4px;font-size:9.5px">0.3</span><div class="a" style="left:9px;top:197.2px;width:3px;height:1px;background:rgba(220,150,170,0.9)"></div><span class="lbl" style="left:28.5px;top:195.3px;font-size:9.5px">0.2</span><div class="a" style="left:9px;top:218.1px;width:3px;height:1px;background:rgba(220,150,170,0.9)"></div><span class="lbl" style="left:28.5px;top:216.2px;font-size:9.5px">0.1</span><span class="lbl" style="left:28.5px;top:237.1px;font-size:9.5px">0</span><span class="lbl" style="left:28.6px;top:254.9px;font-size:9.0px">Danger Level (von Mises)</span><span class="lbl" style="left:28.6px;top:263.2px;font-size:9.0px">Deflection scale: 46.297</span>
<div class="a" style="left:28px;top:286px;width:1px;height:22px;background:#757980"></div><div class="a" style="left:28px;top:308px;width:22px;height:1px;background:#757980"></div><span class="lbl" style="left:30.3px;top:280.3px;color:#50545a;font-size:10px">z</span><span class="lbl" style="left:53.0px;top:303.6px;color:#50545a;font-size:10px">x</span>
<div class="vtab" style="width:37px"><span>Front</span><div class="a" style="left:30px;top:2px;width:1px;height:9px;background:#444"></div><svg width="6" height="4" style="left:32px;top:5px"><path d="M0 0H5L2.5 3Z" fill="#333"/></svg></div>
<div class="a" style="left:687px;top:232.4px;width:27px;height:1.5px;background:#a84444"></div>
<div class="a" style="left:357px;top:0;width:1px;height:99px;background:#4caf4c"></div>
</div>
<div class="a" style="left:392px;top:329px;width:322px;height:145px;background:#d4d0c8;border-left:1px solid #f4f2ee;border-top:1px solid #f4f2ee;border-bottom:1px solid #404040"></div><div class="a" style="left:393px;top:330px;width:321px;height:143px;border-left:1px solid #ffffff;border-top:1px solid #ffffff;border-bottom:1px solid #808080"></div><div class="a" style="left:394px;top:331px;width:320px;height:11px;background:linear-gradient(to right,#0a246a 0%,#1c3c80 35%,#5a80b8 100%)"></div><span class="a" style="left:395.5px;top:332.5px;font-size:8.7px;font-weight:bold;color:#fff;letter-spacing:0.1px">Scan&amp;Solve™ 2014 (64-bit)</span><div class="a" style="left:398px;top:361px;width:316px;height:107px;border-left:1px solid #fff;border-top:1px solid #fff;border-bottom:1px solid #404040"></div><div class="a" style="left:399px;top:466px;width:315px;height:1px;background:#808080"></div><div class="a" style="left:399px;top:348px;width:35px;height:13px;background:#d4d0c8;border-left:1px solid #fff;border-top:1px solid #fff;border-right:1px solid #404040;border-radius:2px 2px 0 0"></div><div class="a" style="left:432px;top:349px;width:1px;height:12px;background:#808080"></div><span class="a" style="left:403.3px;top:351.7px;font-size:8.4px;color:#000">Specify</span><div class="a" style="left:467px;top:348px;width:36px;height:13px;background:#d4d0c8;border-left:1px solid #fff;border-top:1px solid #fff;border-right:1px solid #404040;border-radius:2px 2px 0 0"></div><div class="a" style="left:501px;top:349px;width:1px;height:12px;background:#808080"></div><span class="a" style="left:469.3px;top:351.7px;font-size:8.4px;color:#000">Settings</span><div class="a" style="left:503px;top:348px;width:33px;height:13px;background:#d4d0c8;border-left:1px solid #fff;border-top:1px solid #fff;border-right:1px solid #404040;border-radius:2px 2px 0 0"></div><div class="a" style="left:534px;top:349px;width:1px;height:12px;background:#808080"></div><span class="a" style="left:507.8px;top:351.7px;font-size:8.4px;color:#000">About</span><div class="a" style="left:433px;top:346px;width:34px;height:17px;background:#d4d0c8;border-left:1px solid #fff;border-top:1px solid #fff;border-right:1px solid #404040;border-radius:2px 2px 0 0"></div><div class="a" style="left:465px;top:347px;width:1px;height:15px;background:#808080"></div><span class="a" style="left:437.8px;top:350.3px;font-size:8.4px;color:#000">View</span><div class="a" style="left:405px;top:372px;width:136px;height:25px;border:1px solid #808080"></div><div class="a" style="left:406px;top:373px;width:135px;height:24px;border:1px solid #fff;border-right:none;border-bottom:none"></div><div class="a" style="left:405px;top:397px;width:137px;height:1px;background:#fff"></div><div class="a" style="left:541px;top:372px;width:1px;height:26px;background:#fff"></div><div class="a" style="left:410px;top:371px;width:44px;height:4px;background:#d4d0c8"></div><span class="a" style="left:412.3px;top:369.7px;font-size:7.9px;color:#000">Component</span><div class="a" style="left:546px;top:372px;width:174px;height:25px;border:1px solid #808080"></div><div class="a" style="left:547px;top:373px;width:173px;height:24px;border:1px solid #fff;border-right:none;border-bottom:none"></div><div class="a" style="left:546px;top:397px;width:175px;height:1px;background:#fff"></div><div class="a" style="left:720px;top:372px;width:1px;height:26px;background:#fff"></div><div class="a" style="left:550px;top:371px;width:41px;height:4px;background:#d4d0c8"></div><span class="a" style="left:552.3px;top:369.7px;font-size:7.9px;color:#000">Deflection</span><div class="a" style="left:411px;top:380px;width:125px;height:14px;background:#fff;border-top:1px solid #808080;border-left:1px solid #808080;border-bottom:1px solid #fff;border-right:1px solid #fff"></div><div class="a" style="left:412px;top:381px;width:123px;height:12px;border-top:1px solid #404040;border-left:1px solid #404040"></div><div class="a" style="left:413px;top:382px;width:110px;height:10.5px;background:#0a246a"></div><span class="a" style="left:413.5px;top:383.6px;font-size:8px;color:#fff">Danger Level (von Mises)</span><div class="a" style="left:523px;top:382px;width:12px;height:11px;background:#d4d0c8;border-left:1px solid #fff;border-top:1px solid #fff;border-right:1px solid #404040;border-bottom:1px solid #404040"></div><svg width="6" height="4" style="left:526.5px;top:386px"><path d="M0 0H5L2.5 3Z" fill="#000"/></svg><div class="a" style="left:556px;top:382px;width:9px;height:9px;background:#fff;border-top:1px solid #808080;border-left:1px solid #808080;border-bottom:1px solid #f0f0f0;border-right:1px solid #f0f0f0"></div><svg width="9" height="9" style="left:556px;top:382px"><path d="M2 4 L3.5 6 L7 2" stroke="#000" stroke-width="1.4" fill="none"/></svg><div class="a" style="left:573px;top:384px;width:136px;height:2px;border-top:1px solid #808080;border-bottom:1px solid #fff"></div><div class="a" style="left:622px;top:381px;width:5px;height:9px;background:#d4d0c8;border-left:1px solid #fff;border-top:1px solid #fff;border-right:1px solid #404040;border-bottom:1px solid #404040"></div>
<div class="a" style="left:0;top:744px;width:714px;height:56px;background:#e4e8f0"></div><svg width="56" height="14" style="left:1px;top:744px"><path d="M0.5 1 V7 L6 13.5 H54.5 V1" fill="#d5dae5" stroke="#b7bfcd" stroke-width="1"/></svg><span class="a" style="left:8.0px;top:747.6px;font-size:8.4px;color:#101010">Perspective</span><svg width="29" height="14" style="left:56px;top:744px"><path d="M0.5 1 V7 L6 13.5 H27.5 V1" fill="#d5dae5" stroke="#b7bfcd" stroke-width="1"/></svg><span class="a" style="left:63.5px;top:747.6px;font-size:8.4px;color:#101010">Top</span><svg width="31" height="14" style="left:84px;top:744px"><path d="M0.5 1 V7 L6 13.5 H29.5 V1" fill="#d5dae5" stroke="#b7bfcd" stroke-width="1"/></svg><span class="a" style="left:90.0px;top:747.6px;font-size:8.4px;color:#101010">Front</span><svg width="24" height="14" style="left:147px;top:744px"><path d="M0.5 1 V7 L6 13.5 H22.5 V1" fill="#e2e6ee" stroke="#b7bfcd" stroke-width="1"/></svg><span class="a" style="left:0.0px;top:747.6px;font-size:8.4px;color:#101010"></span><svg width="36" height="14" style="left:112px;top:744px"><path d="M0.5 1 V7 L6 13.5 H34.5 V1" fill="#ffffff" stroke="#b7bfcd" stroke-width="1"/></svg><span class="a" style="left:123.0px;top:747.6px;font-size:8.4px;color:#101010">Right</span><svg width="12" height="10" style="left:153.5px;top:747px"><ellipse cx="6" cy="4.8" rx="1.5" ry="2.6" fill="none" stroke="#6a6e74" stroke-width="1.1"/><path d="M2.5 4.8H4.3M7.7 4.8H9.5" stroke="#6a6e74" stroke-width="1.6"/></svg><div class="a" style="left:2px;top:764px;width:3px;height:22px;background:#c8cedb"></div><div class="a" style="left:7px;top:765px;width:9px;height:9px;background:#fff;border-top:1px solid #8a8a8a;border-left:1px solid #8a8a8a;border-right:1px solid #e0ddd5;border-bottom:1px solid #e0ddd5"></div><span class="a" style="left:19.0px;top:765.8px;font-size:8.4px;color:#101010">End</span><div class="a" style="left:38px;top:765px;width:9px;height:9px;background:#fff;border-top:1px solid #8a8a8a;border-left:1px solid #8a8a8a;border-right:1px solid #e0ddd5;border-bottom:1px solid #e0ddd5"></div><span class="a" style="left:50.0px;top:765.8px;font-size:8.4px;color:#101010">Near</span><div class="a" style="left:72px;top:765px;width:9px;height:9px;background:#fff;border-top:1px solid #8a8a8a;border-left:1px solid #8a8a8a;border-right:1px solid #e0ddd5;border-bottom:1px solid #e0ddd5"></div><span class="a" style="left:84.0px;top:765.8px;font-size:8.4px;color:#101010">Point</span><div class="a" style="left:107px;top:765px;width:9px;height:9px;background:#fff;border-top:1px solid #8a8a8a;border-left:1px solid #8a8a8a;border-right:1px solid #e0ddd5;border-bottom:1px solid #e0ddd5"></div><svg width="9" height="9" style="left:107px;top:765px"><path d="M2 4 L3.7 6.2 L7.2 2" stroke="#000" stroke-width="1.5" fill="none"/></svg><span class="a" style="left:119.0px;top:765.8px;font-size:8.4px;color:#101010">Mid</span><div class="a" style="left:137px;top:765px;width:9px;height:9px;background:#fff;border-top:1px solid #8a8a8a;border-left:1px solid #8a8a8a;border-right:1px solid #e0ddd5;border-bottom:1px solid #e0ddd5"></div><svg width="9" height="9" style="left:137px;top:765px"><path d="M2 4 L3.7 6.2 L7.2 2" stroke="#000" stroke-width="1.5" fill="none"/></svg><span class="a" style="left:149.0px;top:765.8px;font-size:8.4px;color:#101010">Cen</span><div class="a" style="left:168px;top:765px;width:9px;height:9px;background:#fff;border-top:1px solid #8a8a8a;border-left:1px solid #8a8a8a;border-right:1px solid #e0ddd5;border-bottom:1px solid #e0ddd5"></div><svg width="9" height="9" style="left:168px;top:765px"><path d="M2 4 L3.7 6.2 L7.2 2" stroke="#000" stroke-width="1.5" fill="none"/></svg><span class="a" style="left:180.0px;top:765.8px;font-size:8.4px;color:#101010">Int</span><div class="a" style="left:194px;top:765px;width:9px;height:9px;background:#fff;border-top:1px solid #8a8a8a;border-left:1px solid #8a8a8a;border-right:1px solid #e0ddd5;border-bottom:1px solid #e0ddd5"></div><svg width="9" height="9" style="left:194px;top:765px"><path d="M2 4 L3.7 6.2 L7.2 2" stroke="#000" stroke-width="1.5" fill="none"/></svg><span class="a" style="left:206.0px;top:765.8px;font-size:8.4px;color:#101010">Perp</span><div class="a" style="left:228px;top:765px;width:9px;height:9px;background:#fff;border-top:1px solid #8a8a8a;border-left:1px solid #8a8a8a;border-right:1px solid #e0ddd5;border-bottom:1px solid #e0ddd5"></div><svg width="9" height="9" style="left:228px;top:765px"><path d="M2 4 L3.7 6.2 L7.2 2" stroke="#000" stroke-width="1.5" fill="none"/></svg><span class="a" style="left:240.0px;top:765.8px;font-size:8.4px;color:#101010">Tan</span><div class="a" style="left:259px;top:765px;width:9px;height:9px;background:#fff;border-top:1px solid #8a8a8a;border-left:1px solid #8a8a8a;border-right:1px solid #e0ddd5;border-bottom:1px solid #e0ddd5"></div><span class="a" style="left:271.0px;top:765.8px;font-size:8.4px;color:#101010">Quad</span><div class="a" style="left:295px;top:765px;width:9px;height:9px;background:#fff;border-top:1px solid #8a8a8a;border-left:1px solid #8a8a8a;border-right:1px solid #e0ddd5;border-bottom:1px solid #e0ddd5"></div><span class="a" style="left:307.0px;top:765.8px;font-size:8.4px;color:#101010">Knot</span><div class="a" style="left:329px;top:765px;width:9px;height:9px;background:#fff;border-top:1px solid #8a8a8a;border-left:1px solid #8a8a8a;border-right:1px solid #e0ddd5;border-bottom:1px solid #e0ddd5"></div><span class="a" style="left:341.0px;top:765.8px;font-size:8.4px;color:#101010">Vertex</span><div class="a" style="left:368px;top:765px;width:10px;height:10px;background:#d4d0c8;border-left:1px solid #f8f8f8;border-top:1px solid #f8f8f8;border-right:1px solid #707070;border-bottom:1px solid #707070"></div><span class="a" style="left:381px;top:765.8px;font-size:8.4px;color:#101010">Project</span><div class="a" style="left:410px;top:765px;width:10px;height:10px;background:#d4d0c8;border-left:1px solid #f8f8f8;border-top:1px solid #f8f8f8;border-right:1px solid #707070;border-bottom:1px solid #707070"></div><span class="a" style="left:422px;top:765.8px;font-size:8.4px;color:#101010">Disable</span><div class="a" style="left:0;top:788px;width:714px;height:1px;background:#b9bfcb"></div><span class="a" style="left:6.0px;top:791.2px;font-size:9.2px;color:#101010;">CPlane</span><div class="a" style="left:42px;top:789px;width:1px;height:11px;background:#b9bfcb"></div><span class="a" style="left:53.0px;top:791.2px;font-size:9.2px;color:#101010;">x -16.8667</span><div class="a" style="left:107px;top:789px;width:1px;height:11px;background:#b9bfcb"></div><span class="a" style="left:123.0px;top:791.2px;font-size:9.2px;color:#101010;">y 7.8222</span><div class="a" style="left:172px;top:789px;width:1px;height:11px;background:#b9bfcb"></div><span class="a" style="left:187.0px;top:791.2px;font-size:9.2px;color:#101010;">z 0.0000</span><div class="a" style="left:238px;top:789px;width:1px;height:11px;background:#b9bfcb"></div><span class="a" style="left:257.0px;top:791.2px;font-size:9.2px;color:#101010;">Inches</span><div class="a" style="left:303px;top:789px;width:1px;height:11px;background:#b9bfcb"></div><span class="a" style="left:319.0px;top:791.2px;font-size:9.2px;color:#101010;">Default</span><div class="a" style="left:433px;top:789px;width:55px;height:11px;background:#e6e8ec"></div><div class="a" style="left:432px;top:789px;width:1px;height:11px;background:#b9bfcb"></div><span class="a" style="left:441.0px;top:791.2px;font-size:9.2px;color:#101010;">Grid Snap</span><div class="a" style="left:489px;top:789px;width:36px;height:11px;background:#dfeaf6"></div><div class="a" style="left:488px;top:789px;width:1px;height:11px;background:#b9bfcb"></div><span class="a" style="left:494.0px;top:791.2px;font-size:9.2px;color:#101010;font-weight:bold">Ortho</span><div class="a" style="left:526px;top:789px;width:37px;height:11px;background:#dfeaf6"></div><div class="a" style="left:525px;top:789px;width:1px;height:11px;background:#b9bfcb"></div><span class="a" style="left:531.0px;top:791.2px;font-size:9.2px;color:#101010;font-weight:bold">Planar</span><div class="a" style="left:564px;top:789px;width:40px;height:11px;background:#dfeaf6"></div><div class="a" style="left:563px;top:789px;width:1px;height:11px;background:#b9bfcb"></div><span class="a" style="left:569.0px;top:791.2px;font-size:9.2px;color:#101010;font-weight:bold">Osnap</span><div class="a" style="left:605px;top:789px;width:62px;height:11px;background:#e6e8ec"></div><div class="a" style="left:604px;top:789px;width:1px;height:11px;background:#b9bfcb"></div><span class="a" style="left:612.0px;top:791.2px;font-size:9.2px;color:#101010;">SmartTrack</span><div class="a" style="left:668px;top:789px;width:46px;height:11px;background:#e6e8ec"></div><div class="a" style="left:667px;top:789px;width:1px;height:11px;background:#b9bfcb"></div><span class="a" style="left:676.0px;top:791.2px;font-size:9.2px;color:#101010;">Gumball</span><div class="a" style="left:306px;top:790px;width:10px;height:10px;background:#000"></div>
</body></html>
